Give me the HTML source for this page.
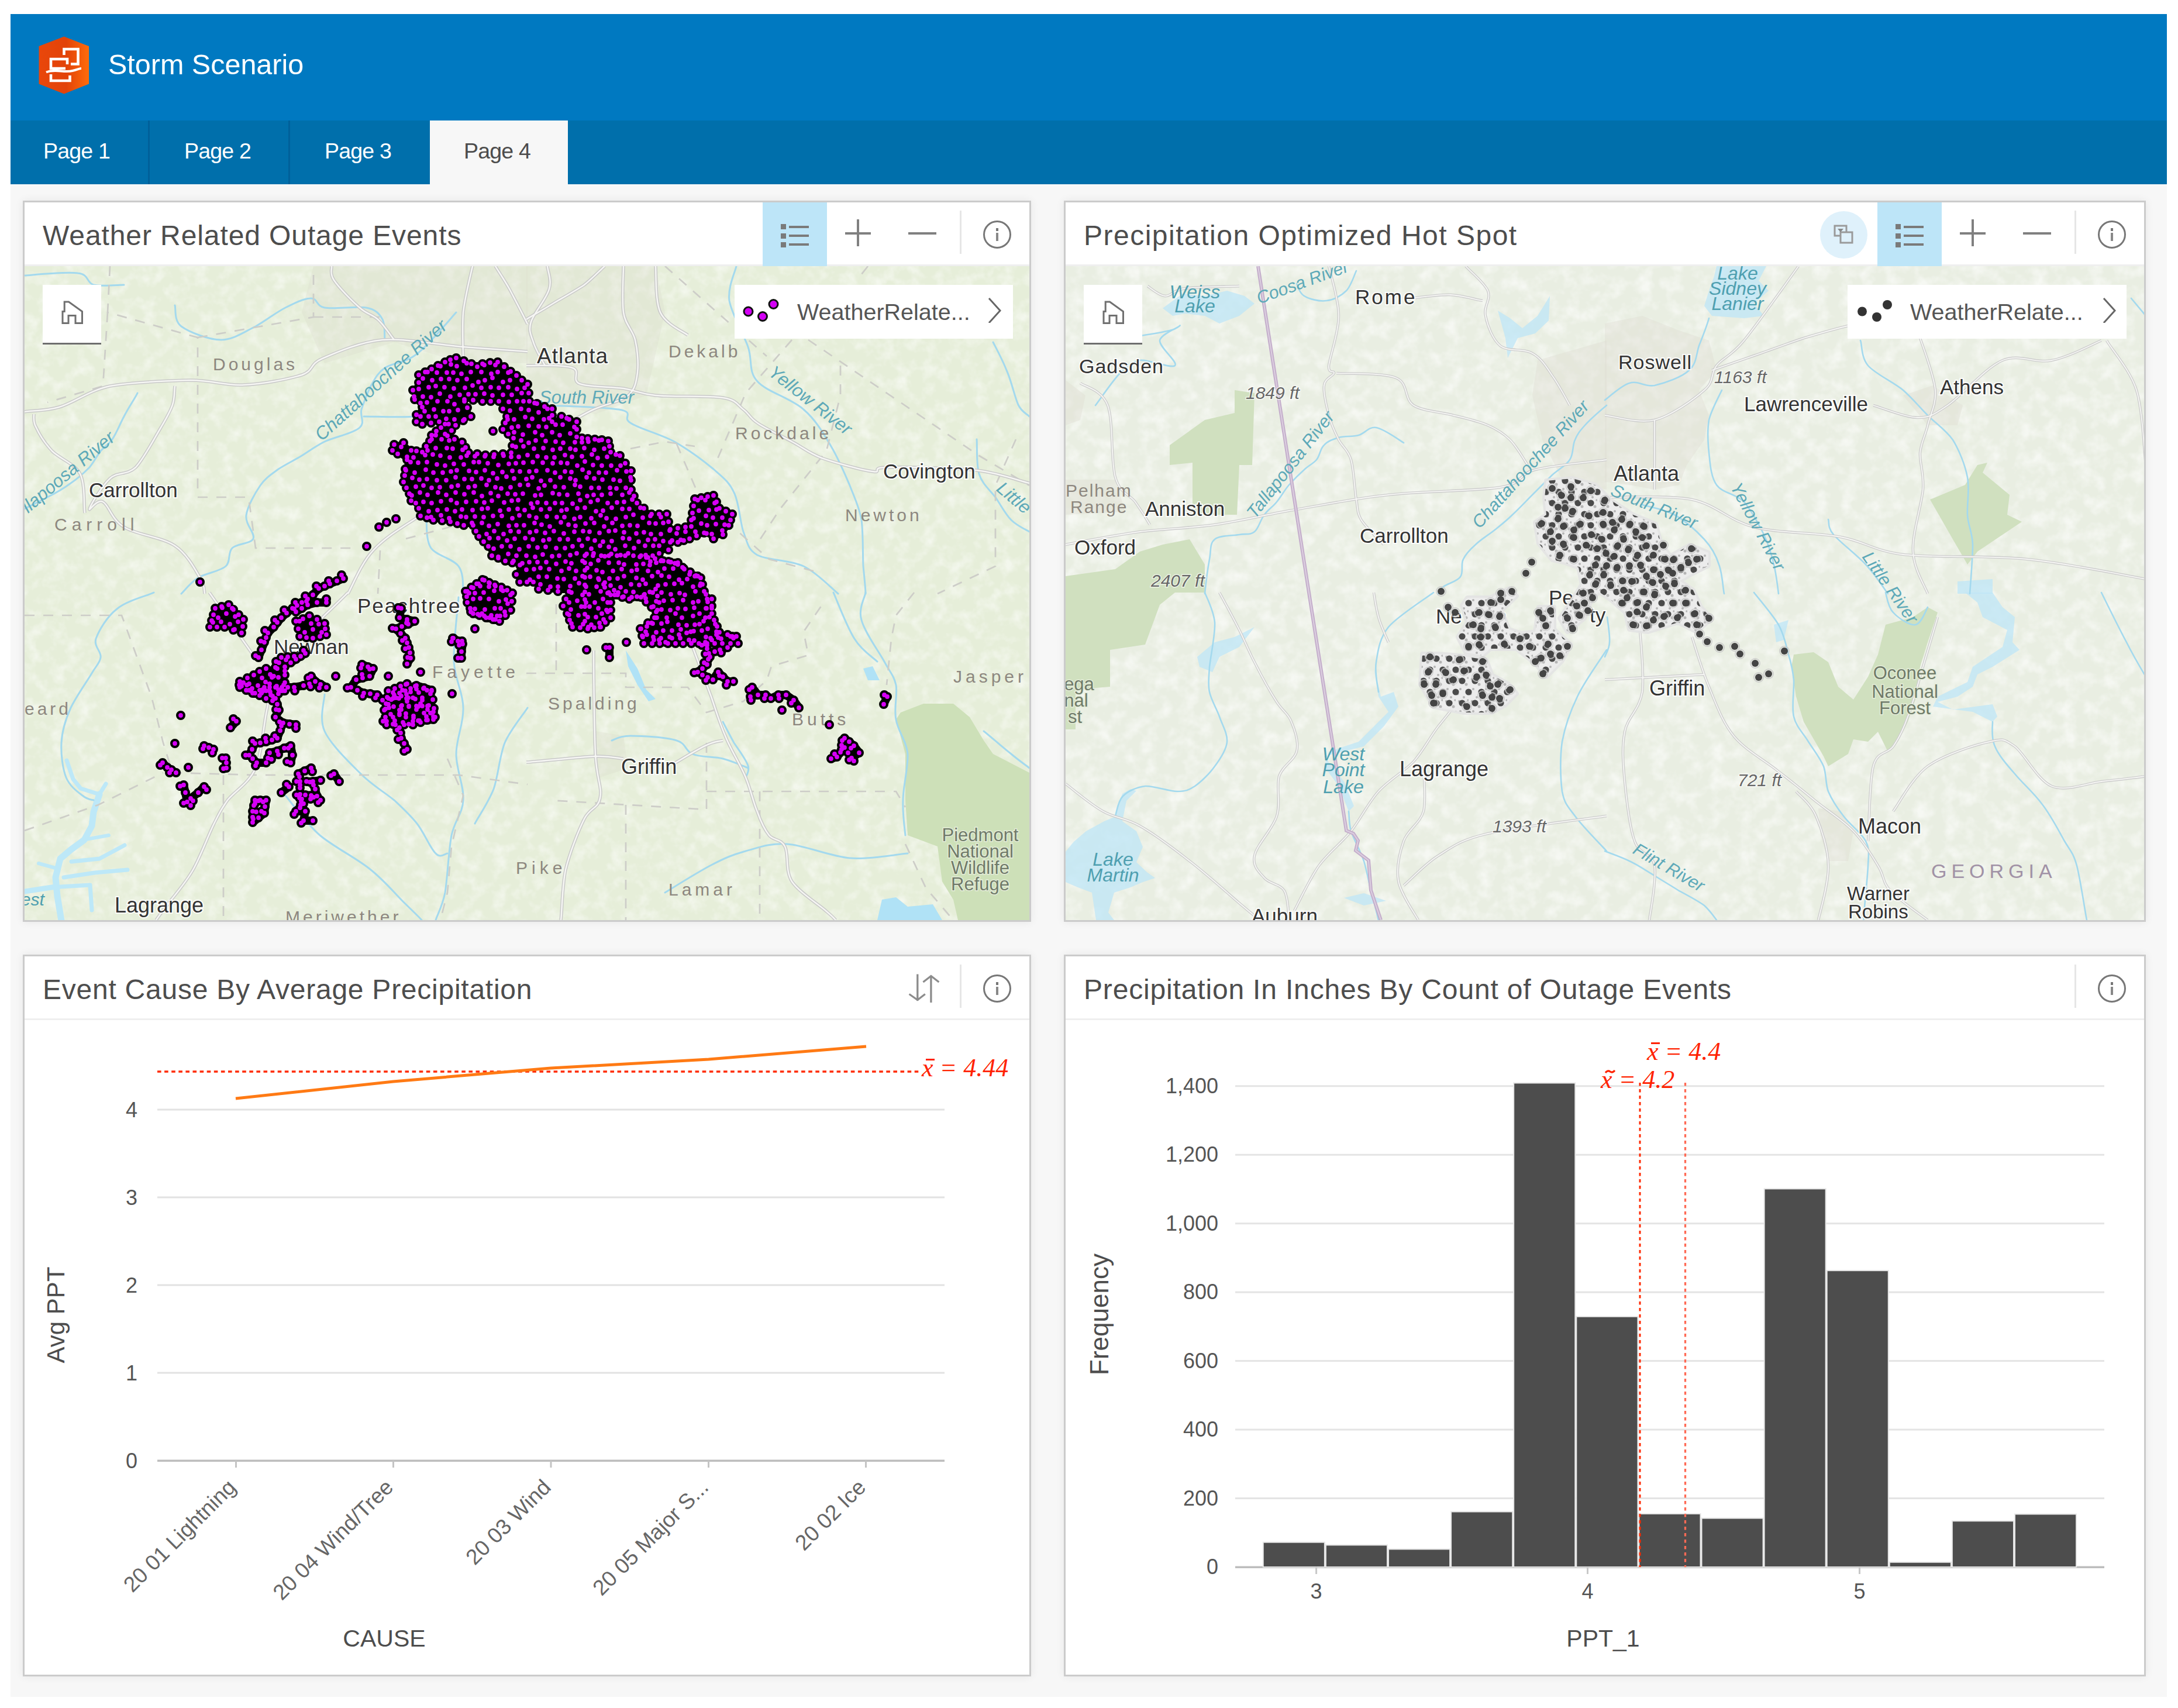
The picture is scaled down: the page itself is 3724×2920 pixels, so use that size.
<!DOCTYPE html><html><head><meta charset="utf-8"><style>
html,body{margin:0;padding:0;background:#fff;width:3724px;height:2920px;overflow:hidden;font-family:"Liberation Sans", sans-serif}
div,svg{box-sizing:content-box}
</style></head><body>
<div style="position:absolute;left:18px;top:24px;width:3687px;height:2877px;background:#f7f7f7"></div>
<div style="position:absolute;left:18px;top:24px;width:3687px;height:182px;background:#0079c1"></div>
<div style="position:absolute;left:18px;top:206px;width:3687px;height:109px;background:#006fab"></div>

<svg style="position:absolute;left:66px;top:62px" width="87" height="99" viewBox="0 0 87 99">
<defs><linearGradient id="lg" x1="0" x2="1" y1="0" y2="0"><stop offset="0" stop-color="#e9470b"/><stop offset="0.55" stop-color="#e24309"/><stop offset="1" stop-color="#ff6c0a"/></linearGradient></defs>
<path d="M43.5 0.5 L86 17 L86 81.5 L43.5 98.5 L0.5 81.5 L0.5 17 Z" fill="url(#lg)"/>
<g fill="none" stroke="#fff" stroke-width="4.6">
<path d="M43.5 32 V22 H67.5 V47.5 H55"/>
<path d="M49 48 V39 H21 V55 H46"/>
<path d="M21 65 V76 H53.5 V67"/>
</g>
<path d="M13 61.5 C28 55 44 63 58 59 C66 57 70 55 73 55" fill="none" stroke="#fff" stroke-width="4"/>
</svg>
<div style="position:absolute;left:185px;top:80px;font-size:48.5px;color:#fff;line-height:60px;white-space:nowrap">Storm Scenario</div>
<div style="position:absolute;left:253px;top:206px;width:3px;height:109px;background:#00609a"></div>
<div style="position:absolute;left:493px;top:206px;width:3px;height:109px;background:#00609a"></div>
<div style="position:absolute;left:735px;top:206px;width:236px;height:109px;background:#f7f7f7"></div>
<div style="position:absolute;left:74px;top:236px;font-size:37.5px;letter-spacing:-0.8px;color:#fff;line-height:44px;white-space:nowrap">Page 1</div>
<div style="position:absolute;left:315px;top:236px;font-size:37.5px;letter-spacing:-0.8px;color:#fff;line-height:44px;white-space:nowrap">Page 2</div>
<div style="position:absolute;left:555px;top:236px;font-size:37.5px;letter-spacing:-0.8px;color:#fff;line-height:44px;white-space:nowrap">Page 3</div>
<div style="position:absolute;left:793px;top:236px;font-size:37.5px;letter-spacing:-0.8px;color:#4c4c4c;line-height:44px;white-space:nowrap">Page 4</div>
<div style="position:absolute;left:39px;top:343px;width:1718px;height:1227px;border:3px solid #cbcbcb;background:#fff;box-shadow:0 0 14px rgba(0,0,0,0.07);overflow:hidden"><div style="position:absolute;left:31px;top:27px;font-size:48px;letter-spacing:0.9px;color:#4d4d4d;white-space:nowrap;line-height:60px">Weather Related Outage Events</div><div style="position:absolute;left:0;top:106px;width:100%;height:3px;background:#efefef"></div></div><svg style="position:absolute;left:1679px;top:374.5px" width="52" height="52" viewBox="0 0 52 52"><circle cx="26" cy="26" r="22.5" fill="none" stroke="#777" stroke-width="3"/><rect x="24" y="15" width="4" height="5" fill="#777"/><rect x="24" y="23" width="4" height="14" fill="#888"/></svg><div style="position:absolute;left:1641px;top:360px;width:3px;height:74px;background:#e6e6e6"></div><svg style="position:absolute;left:1553px;top:374.5px" width="50" height="48"><rect x="0" y="22" width="48" height="4" fill="#808080"/></svg><svg style="position:absolute;left:1445px;top:374.5px" width="50" height="48"><rect x="0" y="22" width="44" height="4" fill="#808080"/><rect x="20" y="0" width="4" height="46" fill="#808080"/></svg><div style="position:absolute;left:1304px;top:346px;width:110px;height:109px;background:#bde5f8"></div><div style="position:absolute;left:1335px;top:380.5px"><svg style="position:absolute;left:0px;top:0px" width="60" height="50" viewBox="0 0 60 50">
<rect x="0" y="2" width="9" height="9" fill="#7a7a7a"/><rect x="0" y="18" width="9" height="9" fill="#7a7a7a"/><rect x="0" y="33" width="9" height="9" fill="#7a7a7a"/>
<rect x="14" y="5" width="34" height="4" fill="#7a7a7a"/><rect x="14" y="20" width="34" height="4" fill="#7a7a7a"/><rect x="14" y="35" width="34" height="4" fill="#7a7a7a"/></svg></div>
<div style="position:absolute;left:1819px;top:343px;width:1844px;height:1227px;border:3px solid #cbcbcb;background:#fff;box-shadow:0 0 14px rgba(0,0,0,0.07);overflow:hidden"><div style="position:absolute;left:31px;top:27px;font-size:48px;letter-spacing:1.5px;color:#4d4d4d;white-space:nowrap;line-height:60px">Precipitation Optimized Hot Spot</div><div style="position:absolute;left:0;top:106px;width:100%;height:3px;background:#efefef"></div></div><svg style="position:absolute;left:3585px;top:374.5px" width="52" height="52" viewBox="0 0 52 52"><circle cx="26" cy="26" r="22.5" fill="none" stroke="#777" stroke-width="3"/><rect x="24" y="15" width="4" height="5" fill="#777"/><rect x="24" y="23" width="4" height="14" fill="#888"/></svg><div style="position:absolute;left:3547px;top:360px;width:3px;height:74px;background:#e6e6e6"></div><svg style="position:absolute;left:3459px;top:374.5px" width="50" height="48"><rect x="0" y="22" width="48" height="4" fill="#808080"/></svg><svg style="position:absolute;left:3351px;top:374.5px" width="50" height="48"><rect x="0" y="22" width="44" height="4" fill="#808080"/><rect x="20" y="0" width="4" height="46" fill="#808080"/></svg><div style="position:absolute;left:3210px;top:346px;width:110px;height:109px;background:#bde5f8"></div><div style="position:absolute;left:3241px;top:380.5px"><svg style="position:absolute;left:0px;top:0px" width="60" height="50" viewBox="0 0 60 50">
<rect x="0" y="2" width="9" height="9" fill="#7a7a7a"/><rect x="0" y="18" width="9" height="9" fill="#7a7a7a"/><rect x="0" y="33" width="9" height="9" fill="#7a7a7a"/>
<rect x="14" y="5" width="34" height="4" fill="#7a7a7a"/><rect x="14" y="20" width="34" height="4" fill="#7a7a7a"/><rect x="14" y="35" width="34" height="4" fill="#7a7a7a"/></svg></div><div style="position:absolute;left:3112px;top:360.5px;width:81px;height:81px;border-radius:50%;background:#dff1fb"></div><svg style="position:absolute;left:3134px;top:382.5px" width="36" height="36" viewBox="0 0 36 36"><rect x="3" y="3" width="20" height="17" fill="none" stroke="#9a9a9a" stroke-width="3"/><rect x="13" y="14" width="20" height="18" fill="#dff1fb" stroke="#9a9a9a" stroke-width="3"/><path d="M8 8h10l-5 6z" fill="#888"/></svg>
<div style="position:absolute;left:39px;top:1632px;width:1718px;height:1228px;border:3px solid #cbcbcb;background:#fff;box-shadow:0 0 14px rgba(0,0,0,0.07);overflow:hidden"><div style="position:absolute;left:31px;top:27px;font-size:48px;letter-spacing:0.75px;color:#4d4d4d;white-space:nowrap;line-height:60px">Event Cause By Average Precipitation</div><div style="position:absolute;left:0;top:106px;width:100%;height:3px;background:#efefef"></div></div><svg style="position:absolute;left:1679px;top:1663.5px" width="52" height="52" viewBox="0 0 52 52"><circle cx="26" cy="26" r="22.5" fill="none" stroke="#777" stroke-width="3"/><rect x="24" y="15" width="4" height="5" fill="#777"/><rect x="24" y="23" width="4" height="14" fill="#888"/></svg><div style="position:absolute;left:1641px;top:1649px;width:3px;height:74px;background:#e6e6e6"></div><svg style="position:absolute;left:1550px;top:1660px" width="60" height="60" viewBox="0 0 60 60"><path d="M18.8 5.6V51M4.6 39.5l14.2 10 13-10M41.9 54V8M28.4 19l13.5-10.5 13.5 10.5" fill="none" stroke="#8c8c8c" stroke-width="3.3"/></svg>
<div style="position:absolute;left:1819px;top:1632px;width:1844px;height:1228px;border:3px solid #cbcbcb;background:#fff;box-shadow:0 0 14px rgba(0,0,0,0.07);overflow:hidden"><div style="position:absolute;left:31px;top:27px;font-size:48px;letter-spacing:0.83px;color:#4d4d4d;white-space:nowrap;line-height:60px">Precipitation In Inches By Count of Outage Events</div><div style="position:absolute;left:0;top:106px;width:100%;height:3px;background:#efefef"></div></div><svg style="position:absolute;left:3585px;top:1663.5px" width="52" height="52" viewBox="0 0 52 52"><circle cx="26" cy="26" r="22.5" fill="none" stroke="#777" stroke-width="3"/><rect x="24" y="15" width="4" height="5" fill="#777"/><rect x="24" y="23" width="4" height="14" fill="#888"/></svg><div style="position:absolute;left:3547px;top:1649px;width:3px;height:74px;background:#e6e6e6"></div>
<svg style="position:absolute;left:42px;top:455px" width="1718" height="1118" viewBox="42 455 1718 1118"><defs><pattern id="mag" x="0" y="0" width="15" height="26" patternUnits="userSpaceOnUse"><circle cx="7.5" cy="6.5" r="4.8" fill="#d800f8"/><circle cx="0" cy="19.5" r="4.8" fill="#d800f8"/><circle cx="15" cy="19.5" r="4.8" fill="#d800f8"/></pattern></defs><rect x="42" y="455" width="1718" height="1118" fill="#e6eed9"/><filter id="tx1" x="0" y="0" width="100%" height="100%"><feTurbulence type="fractalNoise" baseFrequency="0.045" numOctaves="3" seed="7"/><feColorMatrix values="0 0 0 0 1  0 0 0 0 1  0 0 0 0 1  2.2 0 0 0 -0.95"/></filter><rect x="42" y="455" width="1718" height="1118" filter="url(#tx1)" opacity="0.55"/><path d="M536 455 L902 455 L902 621 L792 621 L674 585 L555 621 L516 534Z" fill="#dcdccd" opacity="0.3"/><path d="M900 455 L1121 455 L1137 534 L1105 676 L1018 708 L900 676Z" fill="#dcdccd" opacity="0.3"/><path d="M1018 1250 L1066 1258 L1074 1313 L1026 1329 L1018 1289Z" fill="#dcdccd" opacity="0.3"/><path d="M1540 1218 L1579 1203 L1630 1203 L1658 1226 L1682 1266 L1698 1289 L1760 1321 L1760 1573 L1638 1573 L1630 1538 L1611 1507 L1603 1447 L1552 1428 L1548 1368 L1548 1289 L1532 1230Z" fill="#cde0b8" opacity="1"/><path d="M1508 1538 L1532 1534 L1552 1550 L1595 1546 L1611 1573 L1500 1573Z" fill="#b0e2f6" opacity="1"/><path d="M1070 1112 L1090 1143 L1105 1179 L1121 1195 L1109 1199 L1090 1171 L1074 1139Z" fill="#b0e2f6" opacity="1"/><path d="M1476 1143 L1492 1139 L1504 1163 L1484 1163Z" fill="#b0e2f6" opacity="1"/><g fill="none" stroke="#bde8f8" stroke-linejoin="round" stroke-linecap="round"><path d="M114 1300 L125 1332 L138 1348 L170 1358 L181 1340" stroke-width="7"/><path d="M170 1358 L160 1388 L157 1412 L144 1436 L122 1452 L103 1468 L95 1500 L98 1532 L106 1580" stroke-width="11"/><path d="M141 1436 L186 1428" stroke-width="6"/><path d="M122 1473 L170 1468 L213 1445" stroke-width="7"/><path d="M109 1500 L162 1492 L218 1487" stroke-width="7"/><path d="M103 1516 L154 1513 L157 1556" stroke-width="7"/><path d="M95 1484 L66 1476" stroke-width="6"/><path d="M42 1524 L95 1516" stroke-width="9"/></g><g fill="none" stroke="#a3d9ee" stroke-width="3" stroke-linejoin="round" stroke-linecap="round"><path d="M780 534 C769 546 734 589 713 605 C693 621 671 620 658 629 C645 638 641 648 634 660 C628 672 622 688 618 700 C615 712 625 722 615 731 C604 741 572 747 555 755 C539 763 529 771 516 779 C503 787 488 794 476 802 C464 811 454 817 445 830 C436 843 423 866 421 881 C419 897 437 912 433 921 C429 930 405 929 397 937 C389 945 395 960 386 968 C376 977 351 980 338 988 C326 996 315 1010 310 1015"/><path d="M263 1013 C253 1018 216 1027 200 1041 C183 1054 169 1078 164 1092 C160 1106 174 1114 172 1124 C171 1133 165 1137 157 1151 C148 1166 130 1191 121 1210 C112 1230 106 1250 105 1270 C104 1289 107 1314 113 1329 C119 1344 133 1354 141 1360 C149 1367 157 1367 160 1368"/><path d="M299 522 C301 528 297 548 310 558 C324 568 357 581 378 581 C399 581 418 567 437 558 C455 548 472 534 488 526 C504 518 520 510 532 510 C543 510 540 523 555 526 C571 529 610 523 626 526 C643 529 649 537 654 546 C659 555 657 575 658 581"/><path d="M235 672 C232 679 219 698 212 712 C205 725 199 741 192 751 C185 761 179 763 172 771 C166 779 161 789 153 799 C144 808 133 818 121 826 C109 835 95 843 81 850 C68 857 49 866 42 870"/><path d="M42 471 C57 470 113 464 133 467 C153 469 147 483 160 487 C174 490 203 487 212 487"/><path d="M729 889 C730 897 728 924 737 937 C746 950 775 955 784 968 C794 981 791 1007 792 1015"/><path d="M622 712 C638 712 692 714 713 712 C735 710 746 702 753 700"/><path d="M1259 455 C1257 465 1244 491 1247 514 C1251 537 1271 570 1279 593 C1287 616 1279 635 1295 652 C1311 670 1353 681 1374 700 C1395 718 1408 741 1421 763 C1434 785 1444 809 1453 830 C1461 851 1469 866 1473 889 C1476 912 1475 947 1476 968 C1478 989 1480 1007 1480 1015"/><path d="M900 692 C926 693 1028 695 1058 700 C1088 705 1062 714 1078 723 C1093 733 1129 742 1153 755 C1176 768 1203 788 1220 802 C1237 817 1247 824 1255 842 C1264 860 1265 891 1271 909 C1278 927 1278 939 1295 949 C1312 958 1351 957 1374 968 C1397 979 1423 1007 1433 1015"/><path d="M1670 751 C1671 761 1669 794 1674 810 C1679 827 1692 837 1702 850 C1711 863 1719 879 1729 889 C1739 899 1755 906 1760 909"/><path d="M1698 585 C1702 593 1714 615 1721 633 C1729 650 1735 679 1741 692 C1747 705 1757 708 1760 712"/><path d="M555 1187 C555 1197 545 1228 555 1250 C565 1272 595 1301 615 1321 C634 1341 657 1354 674 1368 C690 1383 701 1393 713 1408 C725 1423 736 1451 745 1459 C753 1468 761 1459 765 1459"/><path d="M488 1360 C498 1372 523 1407 547 1428 C572 1449 610 1467 634 1487 C659 1507 679 1532 694 1546 C708 1560 717 1568 721 1573"/><path d="M784 1021 C783 1039 775 1100 776 1131 C778 1163 792 1184 792 1210 C793 1237 780 1263 780 1289 C780 1316 794 1345 792 1368 C791 1391 778 1401 772 1428 C767 1454 765 1502 761 1526 C756 1551 747 1565 745 1573"/><path d="M902 1210 C896 1220 873 1247 863 1270 C854 1293 852 1326 844 1349 C835 1372 817 1398 812 1408"/><path d="M1480 1013 C1479 1021 1467 1041 1473 1060 C1478 1080 1502 1113 1512 1131 C1522 1150 1528 1154 1532 1171 C1535 1187 1528 1210 1532 1230 C1535 1250 1550 1266 1552 1289 C1553 1312 1544 1345 1544 1368 C1543 1391 1547 1418 1548 1428"/><path d="M1425 1013 C1431 1026 1448 1072 1461 1092 C1473 1112 1494 1125 1500 1131"/><path d="M1046 1266 C1051 1264 1059 1258 1078 1258 C1096 1258 1139 1260 1157 1266 C1174 1271 1171 1284 1184 1289 C1197 1295 1220 1293 1236 1297 C1251 1301 1272 1310 1279 1313"/><path d="M1236 1234 C1239 1240 1248 1257 1255 1270 C1263 1282 1276 1299 1279 1309 C1282 1319 1276 1326 1275 1329"/><path d="M1137 1526 C1150 1518 1193 1491 1216 1479 C1239 1467 1253 1461 1275 1455 C1297 1449 1317 1441 1346 1443 C1376 1445 1419 1464 1453 1467 C1487 1470 1535 1460 1552 1459"/><path d="M1682 1250 C1690 1256 1716 1279 1729 1289 C1742 1300 1755 1309 1760 1313"/></g><g fill="none" stroke="#cdcdc8" stroke-width="2.7" stroke-dasharray="17 15"><path d="M188 455 L184 534 L338 577 L338 850 L425 850 L437 937 L607 937"/><path d="M184 534 L176 660 L81 688"/><path d="M338 577 L536 542 L536 455"/><path d="M536 542 L650 542"/><path d="M650 941 L646 1015"/><path d="M694 921 L784 897"/><path d="M1137 455 L1311 609"/><path d="M1354 581 L1275 672 L1224 791"/><path d="M1382 581 L1674 779 L1760 830"/><path d="M1484 455 L1465 479"/><path d="M1437 625 L1437 676 L1413 771 L1334 870 L1295 929"/><path d="M1157 759 L1196 850 L1315 956 L1405 980"/><path d="M1737 751 L1702 830 L1702 968 L1603 1015"/><path d="M1078 767 L1137 755 L1188 763"/><path d="M42 1052 L208 1052 L259 1191 L279 1270 L295 1321 L437 1325 L784 1325 L902 1341"/><path d="M382 1325 L382 1573"/><path d="M765 1297 L792 1360 L772 1447 L765 1526 L753 1573"/><path d="M42 1420 L168 1376 L279 1321"/><path d="M900 1151 L1070 1151 L1070 1175 L1176 1175 L1208 1218 L1271 1199 L1311 1163 L1319 1139 L1382 1120 L1374 1080 L1409 1029"/><path d="M1563 1013 L1532 1052 L1524 1092 L1516 1171"/><path d="M951 1033 L951 1151"/><path d="M1208 1270 L1208 1384 L939 1368"/><path d="M1070 1376 L1070 1573"/><path d="M1208 1353 L1532 1353 L1548 1380"/><path d="M1299 1353 L1299 1573"/><path d="M1548 1443 L1583 1518 L1630 1573"/></g><g fill="none" stroke="#c9c9c9" stroke-width="5.5" stroke-linejoin="round"><path d="M42 704 C52 702 77 703 101 696 C126 689 151 668 188 660 C226 653 288 651 326 650 C364 650 386 660 417 658 C449 657 493 648 516 641 C538 633 528 623 551 613 C574 603 614 585 654 581 C694 578 751 590 792 593 C834 596 884 600 902 601"/><path d="M900 625 C913 625 964 623 979 629 C994 634 976 650 991 656 C1005 662 1044 661 1066 664 C1088 668 1093 673 1121 676 C1149 679 1211 676 1236 680 C1261 684 1261 693 1271 700 C1281 707 1281 714 1295 723 C1309 733 1336 745 1354 755 C1373 765 1382 774 1405 783 C1428 791 1474 804 1492 806 C1511 809 1486 799 1516 799 C1546 798 1629 800 1670 804 C1711 809 1745 823 1760 826"/><path d="M936 455 C936 462 944 479 939 494 C935 510 913 535 908 550 C903 565 908 573 912 585 C916 598 928 618 932 625"/><path d="M1066 455 C1066 468 1063 513 1066 534 C1069 555 1082 564 1086 581 C1090 598 1092 621 1090 637 C1088 652 1086 666 1074 676 C1061 687 1034 691 1015 700 C995 709 968 726 959 731"/><path d="M1034 455 C1028 460 1013 476 999 487 C984 497 964 508 947 518 C931 528 908 541 900 546"/><path d="M567 455 C568 459 563 467 571 479 C579 491 602 515 615 526 C627 537 636 537 646 546 C656 555 669 575 674 581"/><path d="M808 455 C805 468 795 508 792 534 C790 560 792 600 792 613"/><path d="M847 455 C851 462 862 478 871 494 C880 511 897 544 902 554"/><path d="M299 660 C298 666 299 680 295 692 C291 704 285 714 275 731 C264 749 246 784 232 799 C217 813 201 806 188 818 C175 830 155 863 153 870 C151 876 166 852 176 858 C186 863 191 889 212 901 C232 914 277 918 299 933 C320 947 334 974 342 988 C351 1002 349 1010 350 1015"/><path d="M58 708 C58 712 56 721 62 731 C67 742 77 758 89 771 C102 784 128 793 137 810 C146 828 143 866 145 877"/><path d="M902 771 C884 784 824 831 792 850 C761 869 739 870 713 885 C688 901 658 919 638 941 C618 962 602 1003 595 1015"/><path d="M595 1013 C588 1020 575 1033 555 1052 C536 1072 493 1105 476 1131 C460 1158 463 1180 457 1210 C450 1241 448 1287 437 1313 C426 1339 401 1353 389 1368 C378 1384 376 1388 366 1408 C356 1428 343 1464 330 1487 C317 1510 297 1532 287 1546 C276 1560 270 1568 267 1573"/><path d="M358 1013 L433 1120"/><path d="M1176 1084 C1183 1102 1205 1162 1216 1191 C1226 1220 1230 1235 1240 1258 C1249 1281 1266 1307 1275 1329 C1284 1351 1288 1372 1295 1388 C1301 1405 1307 1418 1315 1428 C1322 1437 1336 1434 1342 1447 C1349 1460 1342 1488 1354 1507 C1366 1525 1401 1547 1413 1558 C1426 1569 1426 1570 1429 1573"/><path d="M900 1303 C920 1302 991 1294 1018 1293 C1046 1292 1058 1297 1066 1297"/><path d="M1015 1112 C1015 1141 1016 1247 1018 1289 C1020 1332 1030 1346 1026 1364 C1023 1383 1009 1380 999 1400 C989 1420 974 1458 967 1487 C961 1516 961 1559 959 1573"/><path d="M1153 1305 C1162 1300 1194 1280 1208 1274 C1222 1267 1231 1267 1236 1266"/><path d="M1121 455 C1122 468 1120 514 1129 534 C1138 554 1168 567 1176 573"/></g><g fill="none" stroke="#f6f6f4" stroke-width="2.5" stroke-linejoin="round"><path d="M42 704 C52 702 77 703 101 696 C126 689 151 668 188 660 C226 653 288 651 326 650 C364 650 386 660 417 658 C449 657 493 648 516 641 C538 633 528 623 551 613 C574 603 614 585 654 581 C694 578 751 590 792 593 C834 596 884 600 902 601"/><path d="M900 625 C913 625 964 623 979 629 C994 634 976 650 991 656 C1005 662 1044 661 1066 664 C1088 668 1093 673 1121 676 C1149 679 1211 676 1236 680 C1261 684 1261 693 1271 700 C1281 707 1281 714 1295 723 C1309 733 1336 745 1354 755 C1373 765 1382 774 1405 783 C1428 791 1474 804 1492 806 C1511 809 1486 799 1516 799 C1546 798 1629 800 1670 804 C1711 809 1745 823 1760 826"/><path d="M936 455 C936 462 944 479 939 494 C935 510 913 535 908 550 C903 565 908 573 912 585 C916 598 928 618 932 625"/><path d="M1066 455 C1066 468 1063 513 1066 534 C1069 555 1082 564 1086 581 C1090 598 1092 621 1090 637 C1088 652 1086 666 1074 676 C1061 687 1034 691 1015 700 C995 709 968 726 959 731"/><path d="M1034 455 C1028 460 1013 476 999 487 C984 497 964 508 947 518 C931 528 908 541 900 546"/><path d="M567 455 C568 459 563 467 571 479 C579 491 602 515 615 526 C627 537 636 537 646 546 C656 555 669 575 674 581"/><path d="M808 455 C805 468 795 508 792 534 C790 560 792 600 792 613"/><path d="M847 455 C851 462 862 478 871 494 C880 511 897 544 902 554"/><path d="M299 660 C298 666 299 680 295 692 C291 704 285 714 275 731 C264 749 246 784 232 799 C217 813 201 806 188 818 C175 830 155 863 153 870 C151 876 166 852 176 858 C186 863 191 889 212 901 C232 914 277 918 299 933 C320 947 334 974 342 988 C351 1002 349 1010 350 1015"/><path d="M58 708 C58 712 56 721 62 731 C67 742 77 758 89 771 C102 784 128 793 137 810 C146 828 143 866 145 877"/><path d="M902 771 C884 784 824 831 792 850 C761 869 739 870 713 885 C688 901 658 919 638 941 C618 962 602 1003 595 1015"/><path d="M595 1013 C588 1020 575 1033 555 1052 C536 1072 493 1105 476 1131 C460 1158 463 1180 457 1210 C450 1241 448 1287 437 1313 C426 1339 401 1353 389 1368 C378 1384 376 1388 366 1408 C356 1428 343 1464 330 1487 C317 1510 297 1532 287 1546 C276 1560 270 1568 267 1573"/><path d="M358 1013 L433 1120"/><path d="M1176 1084 C1183 1102 1205 1162 1216 1191 C1226 1220 1230 1235 1240 1258 C1249 1281 1266 1307 1275 1329 C1284 1351 1288 1372 1295 1388 C1301 1405 1307 1418 1315 1428 C1322 1437 1336 1434 1342 1447 C1349 1460 1342 1488 1354 1507 C1366 1525 1401 1547 1413 1558 C1426 1569 1426 1570 1429 1573"/><path d="M900 1303 C920 1302 991 1294 1018 1293 C1046 1292 1058 1297 1066 1297"/><path d="M1015 1112 C1015 1141 1016 1247 1018 1289 C1020 1332 1030 1346 1026 1364 C1023 1383 1009 1380 999 1400 C989 1420 974 1458 967 1487 C961 1516 961 1559 959 1573"/><path d="M1153 1305 C1162 1300 1194 1280 1208 1274 C1222 1267 1231 1267 1236 1266"/><path d="M1121 455 C1122 468 1120 514 1129 534 C1138 554 1168 567 1176 573"/></g><g font-family="Liberation Sans"><text x="918" y="621" font-size="37" fill="#333" stroke="#fff" stroke-width="4" stroke-opacity="0.85" paint-order="stroke" letter-spacing="1">Atlanta</text><text x="152" y="850" font-size="35" fill="#333" stroke="#fff" stroke-width="4" stroke-opacity="0.85" paint-order="stroke" letter-spacing="0">Carrollton</text><text x="1510" y="818" font-size="35" fill="#333" stroke="#fff" stroke-width="4" stroke-opacity="0.85" paint-order="stroke" letter-spacing="0">Covington</text><text x="611" y="1048" font-size="35" fill="#333" stroke="#fff" stroke-width="4" stroke-opacity="0.85" paint-order="stroke" letter-spacing="2">Peachtree</text><text x="468" y="1118" font-size="35" fill="#333" stroke="#fff" stroke-width="4" stroke-opacity="0.85" paint-order="stroke" letter-spacing="0">Newnan</text><text x="1062" y="1323" font-size="36" fill="#333" stroke="#fff" stroke-width="4" stroke-opacity="0.85" paint-order="stroke" letter-spacing="0">Griffin</text><text x="196" y="1560" font-size="36" fill="#333" stroke="#fff" stroke-width="4" stroke-opacity="0.85" paint-order="stroke" letter-spacing="0">Lagrange</text><text x="364" y="633" font-size="30" fill="#8d877f" letter-spacing="5">Douglas</text><text x="1143" y="611" font-size="30" fill="#8d877f" letter-spacing="5">Dekalb</text><text x="1257" y="751" font-size="30" fill="#8d877f" letter-spacing="5">Rockdale</text><text x="93" y="907" font-size="30" fill="#8d877f" letter-spacing="8">Carroll</text><text x="1445" y="891" font-size="30" fill="#8d877f" letter-spacing="5">Newton</text><text x="739" y="1159" font-size="30" fill="#8d877f" letter-spacing="7">Fayette</text><text x="937" y="1213" font-size="30" fill="#8d877f" letter-spacing="5">Spalding</text><text x="1630" y="1167" font-size="30" fill="#8d877f" letter-spacing="6">Jasper</text><text x="1354" y="1240" font-size="30" fill="#8d877f" letter-spacing="6">Butts</text><text x="42" y="1222" font-size="30" fill="#8d877f" letter-spacing="5">eard</text><text x="882" y="1494" font-size="30" fill="#8d877f" letter-spacing="7">Pike</text><text x="1143" y="1531" font-size="30" fill="#8d877f" letter-spacing="6">Lamar</text><text x="488" y="1578" font-size="30" fill="#8d877f" letter-spacing="5">Meriwether</text><text x="1676" y="1438" font-size="31" fill="#6f7a68" stroke="#e4ecd9" stroke-width="3" paint-order="stroke" text-anchor="middle">Piedmont</text><text x="1676" y="1466" font-size="31" fill="#6f7a68" stroke="#e4ecd9" stroke-width="3" paint-order="stroke" text-anchor="middle">National</text><text x="1676" y="1494" font-size="31" fill="#6f7a68" stroke="#e4ecd9" stroke-width="3" paint-order="stroke" text-anchor="middle">Wildlife</text><text x="1676" y="1522" font-size="31" fill="#6f7a68" stroke="#e4ecd9" stroke-width="3" paint-order="stroke" text-anchor="middle">Refuge</text><text x="0" y="0" transform="translate(550,755) rotate(-42)" font-size="31" fill="#5da9b8" font-style="italic" letter-spacing="0">Chattahoochee River</text><text x="0" y="0" transform="translate(922,690) rotate(0)" font-size="31" fill="#5da9b8" font-style="italic" letter-spacing="0">South River</text><text x="0" y="0" transform="translate(1312,640) rotate(38)" font-size="31" fill="#5da9b8" font-style="italic" letter-spacing="0">Yellow River</text><text x="0" y="0" transform="translate(48,878) rotate(-40)" font-size="31" fill="#5da9b8" font-style="italic" letter-spacing="0">llapoosa River</text><text x="0" y="0" transform="translate(1702,838) rotate(40)" font-size="31" fill="#5da9b8" font-style="italic" letter-spacing="0">Little</text><text x="42" y="1548" font-size="30" fill="#4e9fb0" font-style="italic" text-anchor="middle">West</text></g><g><path d="M716 641 L738 631 L761 619 L780 612 L806 622 L825 622 L851 619 L873 635 L902 657 L905 686 L944 699 L944 721 L960 712 L986 721 L986 747 L1005 750 L1040 754 L1044 773 L1060 779 L1079 805 L1079 837 L1089 860 L1114 879 L1140 879 L1146 905 L1172 901 L1182 889 L1188 853 L1220 847 L1230 869 L1252 879 L1246 898 L1236 914 L1220 921 L1204 911 L1179 921 L1159 927 L1146 927 L1143 940 L1127 946 L1105 953 L1111 966 L1134 959 L1159 962 L1179 982 L1198 988 L1204 1011 L1217 1024 L1217 1049 L1230 1081 L1259 1088 L1262 1100 L1101 1100 L1095 1075 L1121 1056 L1127 1030 L1121 1007 L1101 1017 L1076 1024 L1056 1017 L1044 1001 L1024 991 L1044 1017 L1044 1056 L1027 1072 L1005 1075 L979 1072 L970 1049 L963 1036 L973 1011 L954 1011 L921 1007 L912 995 L889 995 L883 982 L889 966 L864 959 L841 950 L835 934 L819 917 L809 898 L793 898 L770 892 L741 889 L719 882 L716 869 L703 856 L700 844 L690 824 L693 802 L696 786 L680 776 L671 770 L674 760 L690 757 L703 770 L722 773 L735 754 L738 744 L754 731 L761 725 L751 721 L722 725 L712 721 L712 709 L722 696 L709 683 L706 667 L716 654Z M796 1011 L825 991 L857 1004 L876 1014 L873 1043 L854 1062 L831 1056 L809 1049 L799 1030Z M368 1040 L391 1034 L416 1059 L413 1082 L384 1072 L359 1072Z M506 1062 L529 1053 L555 1066 L558 1085 L535 1091 L513 1088Z M799 1011 L828 992 L857 1008 L873 1017 L863 1046 L847 1059 L828 1053 L805 1046 L799 1030Z M664 1181 L696 1169 L738 1181 L744 1226 L706 1239 L661 1239 L657 1214Z M455 1143 L487 1140 L487 1181 L455 1194 L410 1175 L423 1159Z M1000 950 L1096 950 L1154 963 L1193 985 L1209 1024 L1206 1056 L1186 1079 L1161 1085 L1138 1098 L1106 1085 L1096 1075 L1116 1066 L1122 1046 L1096 1021 L1064 1021 L1039 1014 L1039 1046 L1026 1072 L1006 1072 L1000 1062Z M805 712 L779 727 L765 745 L790 756 L801 774 L830 778 L874 774 L878 749 L860 734 L867 712 L853 686 L825 686 L794 683Z " fill="#000" fill-rule="nonzero" stroke="#000" stroke-width="6" stroke-linejoin="round"/><path d="M587 989 L564 998 L545 1006 L535 1017 L516 1030 L500 1040 L481 1056 L468 1072 L458 1082 L452 1098 L442 1124 M558 1030 L542 1030 L526 1034 L506 1046 M522 1117 L506 1127 L497 1133 L481 1124 L474 1143 L468 1156 L461 1169 L455 1181 L471 1194 L477 1214 L471 1226 L484 1236 L506 1239 M484 1236 L474 1262 L455 1268 L436 1271 L426 1291 L439 1304 L455 1304 L461 1287 L474 1284 L497 1275 L500 1291 L497 1304 M410 1165 L426 1169 L436 1185 L452 1175 L471 1175 L503 1175 L519 1172 L539 1165 L558 1175 M532 1156 L539 1165 M686 1040 L683 1056 L709 1062 L677 1075 L693 1091 L699 1107 L702 1125 L696 1135 M775 1091 L791 1101 L789 1114 L789 1125 M619 1136 L638 1143 L632 1156 L609 1162 L600 1175 L622 1185 L645 1188 L654 1197 L664 1204 L674 1188 L693 1181 L712 1172 L738 1180 M674 1188 L722 1197 L741 1217 L741 1230 L706 1233 L683 1220 L661 1233 L683 1244 L686 1262 L696 1281 M686 1207 L712 1207 L731 1207 M278 1304 L286 1312 L301 1321 M314 1342 L317 1355 L320 1371 L326 1377 M326 1365 L339 1355 L349 1345 M510 1323 L532 1313 M513 1336 L535 1336 L548 1334 M494 1345 L481 1355 M513 1358 L542 1361 L548 1368 M519 1374 L506 1387 L522 1387 L519 1403 L535 1403 M513 1336 L513 1358 L519 1374 M535 1336 L542 1361 M571 1323 L580 1336 M436 1368 L455 1368 L452 1390 L432 1406 L432 1387 L436 1368 M349 1275 L365 1281 M386 1296 L387 1313 M404 1233 L394 1244 M1206 1098 L1225 1085 M1212 1117 L1231 1111 L1244 1107 M1206 1101 L1212 1117 L1209 1136 L1193 1149 L1219 1162 L1228 1149 L1244 1165 L1254 1165 M1286 1175 L1296 1188 L1309 1188 L1318 1194 L1331 1188 L1344 1188 L1357 1197 L1366 1210 M1283 1191 L1296 1188 M1444 1262 L1460 1275 L1469 1287 M1444 1278 L1431 1294 L1421 1297 M1456 1296 L1469 1287 M1444 1278 L1456 1296 M1517 1191 L1511 1204 M1042 1107 L1042 1124 " fill="none" stroke="#000" stroke-width="14" stroke-linejoin="round" stroke-linecap="round"/><path d="M716 641h0M727 636h0M738 631h0M749 625h0M761 619h0M770 615h0M780 612h0M793 617h0M806 622h0M825 622h0M838 620h0M851 619h0M862 627h0M873 635h0M883 642h0M892 650h0M902 657h0M904 672h0M905 686h0M918 690h0M931 695h0M944 699h0M944 710h0M944 721h0M960 712h0M973 717h0M986 721h0M986 734h0M986 747h0M995 749h0M1005 750h0M1017 751h0M1029 752h0M1040 754h0M1042 763h0M1044 773h0M1060 779h0M1069 792h0M1079 805h0M1079 821h0M1079 837h0M1084 848h0M1089 860h0M1101 869h0M1114 879h0M1127 879h0M1140 879h0M1143 892h0M1146 905h0M1159 903h0M1172 901h0M1182 889h0M1184 877h0M1186 865h0M1188 853h0M1199 851h0M1210 849h0M1220 847h0M1225 858h0M1230 869h0M1241 874h0M1252 879h0M1249 889h0M1246 898h0M1236 914h0M1220 921h0M1204 911h0M1191 916h0M1179 921h0M1169 924h0M1159 927h0M1146 927h0M1143 940h0M1127 946h0M1116 950h0M1105 953h0M1111 966h0M1122 962h0M1134 959h0M1146 961h0M1159 962h0M1169 972h0M1179 982h0M1188 985h0M1198 988h0M1201 999h0M1204 1011h0M1217 1024h0M1217 1036h0M1217 1049h0M1221 1060h0M1226 1071h0M1230 1081h0M1244 1085h0M1259 1088h0M1262 1100h0M1249 1100h0M1235 1100h0M1222 1100h0M1209 1100h0M1195 1100h0M1182 1100h0M1168 1100h0M1155 1100h0M1142 1100h0M1128 1100h0M1115 1100h0M1101 1100h0M1098 1087h0M1095 1075h0M1108 1065h0M1121 1056h0M1124 1043h0M1127 1030h0M1124 1019h0M1121 1007h0M1111 1012h0M1101 1017h0M1089 1020h0M1076 1024h0M1066 1020h0M1056 1017h0M1050 1009h0M1044 1001h0M1034 996h0M1024 991h0M1034 1004h0M1044 1017h0M1044 1030h0M1044 1043h0M1044 1056h0M1035 1064h0M1027 1072h0M1016 1073h0M1005 1075h0M992 1073h0M979 1072h0M974 1060h0M970 1049h0M963 1036h0M968 1024h0M973 1011h0M954 1011h0M937 1009h0M921 1007h0M912 995h0M901 995h0M889 995h0M883 982h0M889 966h0M876 962h0M864 959h0M852 954h0M841 950h0M835 934h0M827 926h0M819 917h0M814 908h0M809 898h0M793 898h0M782 895h0M770 892h0M756 890h0M741 889h0M730 885h0M719 882h0M716 869h0M703 856h0M700 844h0M695 834h0M690 824h0M692 813h0M693 802h0M696 786h0M680 776h0M671 770h0M674 760h0M690 757h0M703 770h0M712 771h0M722 773h0M729 763h0M735 754h0M738 744h0M746 737h0M754 731h0M761 725h0M751 721h0M737 723h0M722 725h0M712 721h0M712 709h0M722 696h0M709 683h0M706 667h0M716 654h0M716 641h0M796 1011h0M806 1004h0M815 998h0M825 991h0M836 996h0M846 1000h0M857 1004h0M867 1009h0M876 1014h0M875 1028h0M873 1043h0M864 1052h0M854 1062h0M843 1059h0M831 1056h0M820 1052h0M809 1049h0M804 1040h0M799 1030h0M798 1020h0M796 1011h0M368 1040h0M379 1037h0M391 1034h0M399 1042h0M408 1051h0M416 1059h0M415 1071h0M413 1082h0M399 1077h0M384 1072h0M371 1072h0M359 1072h0M362 1061h0M365 1051h0M368 1040h0M506 1062h0M518 1058h0M529 1053h0M542 1059h0M555 1066h0M556 1075h0M558 1085h0M547 1088h0M535 1091h0M524 1090h0M513 1088h0M510 1075h0M506 1062h0M799 1011h0M809 1005h0M818 998h0M828 992h0M837 997h0M847 1002h0M857 1008h0M873 1017h0M868 1032h0M863 1046h0M855 1053h0M847 1059h0M837 1056h0M828 1053h0M817 1050h0M805 1046h0M799 1030h0M799 1011h0M664 1181h0M675 1177h0M685 1173h0M696 1169h0M710 1173h0M724 1177h0M738 1181h0M740 1196h0M742 1211h0M744 1226h0M731 1231h0M719 1235h0M706 1239h0M691 1239h0M676 1239h0M661 1239h0M659 1226h0M657 1214h0M660 1203h0M662 1192h0M664 1181h0M455 1143h0M471 1141h0M487 1140h0M487 1154h0M487 1167h0M487 1181h0M476 1186h0M466 1190h0M455 1194h0M444 1189h0M432 1185h0M421 1180h0M410 1175h0M416 1167h0M423 1159h0M434 1154h0M444 1148h0M455 1143h0M1000 950h0M1014 950h0M1028 950h0M1041 950h0M1055 950h0M1069 950h0M1083 950h0M1096 950h0M1108 953h0M1120 955h0M1131 958h0M1143 960h0M1154 963h0M1167 970h0M1180 978h0M1193 985h0M1198 998h0M1204 1011h0M1209 1024h0M1207 1040h0M1206 1056h0M1196 1067h0M1186 1079h0M1174 1082h0M1161 1085h0M1149 1091h0M1138 1098h0M1127 1094h0M1117 1089h0M1106 1085h0M1096 1075h0M1106 1071h0M1116 1066h0M1119 1056h0M1122 1046h0M1114 1038h0M1105 1029h0M1096 1021h0M1080 1021h0M1064 1021h0M1051 1017h0M1039 1014h0M1039 1030h0M1039 1046h0M1032 1059h0M1026 1072h0M1006 1072h0M1000 1062h0M1000 1050h0M1000 1037h0M1000 1025h0M1000 1012h0M1000 1000h0M1000 987h0M1000 975h0M1000 962h0M1000 950h0M805 712h0M792 719h0M779 727h0M772 736h0M765 745h0M777 751h0M790 756h0M796 765h0M801 774h0M816 776h0M830 778h0M845 777h0M860 776h0M874 774h0M876 762h0M878 749h0M869 742h0M860 734h0M864 723h0M867 712h0M860 699h0M853 686h0M839 686h0M825 686h0M809 684h0M794 683h0M799 697h0M805 712h0M587 989h0M576 993h0M564 998h0M555 1002h0M545 1006h0M535 1017h0M526 1024h0M516 1030h0M508 1035h0M500 1040h0M490 1048h0M481 1056h0M474 1064h0M468 1072h0M458 1082h0M455 1090h0M452 1098h0M447 1111h0M442 1124h0M584 983h0M562 993h0M541 1002h0M522 1019h0M505 1030h0M486 1043h0M470 1060h0M453 1078h0M446 1096h0M437 1121h0M558 1030h0M542 1030h0M526 1034h0M516 1040h0M506 1046h0M558 1024h0M524 1028h0M503 1041h0M522 1117h0M514 1122h0M506 1127h0M497 1133h0M489 1128h0M481 1124h0M477 1133h0M474 1143h0M468 1156h0M461 1169h0M455 1181h0M463 1188h0M471 1194h0M474 1204h0M477 1214h0M471 1226h0M484 1236h0M495 1238h0M506 1239h0M519 1112h0M503 1122h0M492 1123h0M472 1131h0M462 1153h0M449 1182h0M466 1198h0M472 1213h0M481 1241h0M506 1245h0M484 1236h0M479 1249h0M474 1262h0M465 1265h0M455 1268h0M445 1270h0M436 1271h0M431 1281h0M426 1291h0M432 1297h0M439 1304h0M455 1304h0M458 1296h0M461 1287h0M474 1284h0M486 1279h0M497 1275h0M500 1291h0M497 1304h0M478 1234h0M470 1258h0M454 1262h0M432 1267h0M420 1291h0M437 1309h0M464 1298h0M476 1290h0M493 1279h0M491 1302h0M410 1165h0M426 1169h0M431 1177h0M436 1185h0M444 1180h0M452 1175h0M461 1175h0M471 1175h0M482 1175h0M492 1175h0M503 1175h0M519 1172h0M529 1169h0M539 1165h0M548 1170h0M558 1175h0M409 1171h0M426 1180h0M447 1185h0M461 1181h0M482 1181h0M504 1181h0M531 1174h0M546 1176h0M532 1156h0M539 1165h0M527 1159h0M686 1040h0M683 1056h0M696 1059h0M709 1062h0M698 1067h0M687 1071h0M677 1075h0M685 1083h0M693 1091h0M696 1099h0M699 1107h0M701 1116h0M702 1125h0M696 1135h0M681 1039h0M695 1065h0M696 1061h0M671 1074h0M688 1095h0M693 1109h0M697 1124h0M775 1091h0M783 1096h0M791 1101h0M789 1114h0M789 1125h0M772 1097h0M785 1103h0M783 1125h0M619 1136h0M629 1140h0M638 1143h0M632 1156h0M620 1159h0M609 1162h0M600 1175h0M611 1180h0M622 1185h0M633 1186h0M645 1188h0M654 1197h0M664 1204h0M669 1196h0M674 1188h0M683 1185h0M693 1181h0M702 1177h0M712 1172h0M725 1176h0M738 1180h0M617 1142h0M632 1144h0M619 1153h0M594 1176h0M620 1190h0M642 1193h0M665 1210h0M677 1193h0M695 1187h0M712 1178h0M736 1186h0M674 1188h0M686 1190h0M698 1193h0M710 1195h0M722 1197h0M731 1207h0M741 1217h0M741 1230h0M729 1231h0M717 1232h0M706 1233h0M694 1226h0M683 1220h0M672 1226h0M661 1233h0M672 1238h0M683 1244h0M685 1253h0M686 1262h0M691 1271h0M696 1281h0M672 1194h0M696 1199h0M719 1203h0M736 1219h0M729 1225h0M707 1227h0M683 1214h0M655 1233h0M679 1248h0M681 1264h0M691 1284h0M686 1207h0M699 1207h0M712 1207h0M722 1207h0M731 1207h0M686 1213h0M712 1213h0M731 1213h0M278 1304h0M286 1312h0M293 1316h0M301 1321h0M274 1308h0M290 1321h0M314 1342h0M317 1355h0M320 1371h0M326 1377h0M308 1344h0M314 1373h0M326 1365h0M339 1355h0M349 1345h0M330 1369h0M353 1350h0M510 1323h0M521 1318h0M532 1313h0M512 1328h0M534 1319h0M513 1336h0M524 1336h0M535 1336h0M548 1334h0M513 1342h0M536 1342h0M494 1345h0M481 1355h0M490 1341h0M513 1358h0M522 1359h0M532 1360h0M542 1361h0M548 1368h0M512 1364h0M531 1366h0M544 1372h0M519 1374h0M513 1381h0M506 1387h0M522 1387h0M519 1403h0M535 1403h0M515 1370h0M503 1392h0M515 1407h0M513 1336h0M513 1347h0M513 1358h0M516 1366h0M519 1374h0M507 1336h0M507 1359h0M514 1376h0M535 1336h0M539 1349h0M542 1361h0M530 1337h0M536 1363h0M571 1323h0M580 1336h0M566 1326h0M436 1368h0M445 1368h0M455 1368h0M453 1379h0M452 1390h0M442 1398h0M432 1406h0M432 1397h0M432 1387h0M434 1377h0M436 1368h0M436 1374h0M450 1371h0M447 1387h0M433 1400h0M438 1388h0M442 1369h0M349 1275h0M357 1278h0M365 1281h0M347 1280h0M363 1287h0M386 1296h0M387 1304h0M387 1313h0M380 1296h0M382 1314h0M404 1233h0M394 1244h0M399 1229h0M1206 1098h0M1215 1091h0M1225 1085h0M1209 1103h0M1228 1090h0M1212 1117h0M1222 1114h0M1231 1111h0M1244 1107h0M1214 1123h0M1233 1116h0M1206 1101h0M1209 1109h0M1212 1117h0M1211 1127h0M1209 1136h0M1201 1143h0M1193 1149h0M1201 1154h0M1210 1158h0M1219 1162h0M1228 1149h0M1236 1157h0M1244 1165h0M1254 1165h0M1200 1103h0M1206 1118h0M1204 1133h0M1187 1150h0M1207 1163h0M1230 1155h0M1242 1171h0M1286 1175h0M1296 1188h0M1309 1188h0M1318 1194h0M1331 1188h0M1344 1188h0M1357 1197h0M1366 1210h0M1281 1179h0M1307 1194h0M1332 1194h0M1353 1202h0M1283 1191h0M1296 1188h0M1284 1197h0M1444 1262h0M1452 1268h0M1460 1275h0M1469 1287h0M1440 1266h0M1455 1279h0M1444 1278h0M1437 1286h0M1431 1294h0M1421 1297h0M1439 1274h0M1427 1289h0M1456 1296h0M1469 1287h0M1460 1301h0M1444 1278h0M1450 1287h0M1456 1296h0M1439 1281h0M1452 1299h0M1517 1191h0M1511 1204h0M1512 1188h0M1042 1107h0M1042 1124h0M1036 1107h0M843 737h0M648 901h0M661 893h0M677 887h0M627 934h0M812 1075h0M1252 1088h0M774 1091h0M790 1096h0M342 995h0M574 1156h0M664 1156h0M719 1149h0M773 1186h0M812 1075h0M309 1223h0M299 1271h0M322 1312h0M1254 1091h0M1337 1214h0M1418 1239h0M1071 1098h0M1003 1111h0" stroke="#000" stroke-width="16" stroke-linecap="round" fill="none"/><path d="M753 626h0M771 623h0M781 626h0M798 621h0M816 627h0M828 624h0M847 624h0M731 636h0M747 637h0M764 637h0M775 637h0M789 639h0M805 636h0M823 636h0M840 639h0M851 636h0M869 637h0M723 647h0M739 650h0M754 648h0M768 648h0M782 650h0M798 648h0M818 653h0M829 650h0M842 646h0M860 653h0M872 650h0M716 665h0M733 662h0M745 660h0M760 662h0M776 664h0M795 663h0M808 659h0M823 663h0M839 662h0M853 663h0M869 662h0M884 665h0M897 663h0M708 678h0M723 678h0M737 679h0M752 673h0M770 678h0M786 675h0M801 674h0M813 674h0M828 673h0M842 676h0M860 675h0M875 675h0M892 672h0M719 689h0M730 688h0M748 686h0M765 686h0M777 691h0M794 686h0M870 687h0M884 686h0M895 686h0M914 689h0M726 703h0M742 700h0M758 703h0M768 703h0M783 701h0M872 702h0M891 699h0M904 701h0M921 705h0M936 699h0M719 712h0M733 712h0M745 712h0M763 716h0M777 717h0M794 717h0M868 717h0M879 717h0M898 713h0M910 716h0M930 717h0M939 715h0M969 715h0M767 725h0M875 731h0M886 729h0M904 728h0M921 729h0M934 730h0M950 726h0M962 726h0M982 730h0M745 744h0M761 742h0M879 739h0M894 743h0M915 739h0M927 744h0M944 739h0M957 744h0M975 741h0M738 751h0M755 751h0M768 753h0M891 753h0M904 757h0M916 753h0M933 754h0M950 755h0M963 757h0M983 756h0M995 756h0M1006 755h0M1024 753h0M686 764h0M731 770h0M745 766h0M764 766h0M774 767h0M791 769h0M882 764h0M895 763h0M913 767h0M929 766h0M945 769h0M958 767h0M975 767h0M984 769h0M999 766h0M1016 769h0M1033 767h0M696 781h0M707 782h0M727 778h0M740 777h0M753 779h0M769 782h0M788 782h0M798 779h0M812 780h0M829 780h0M844 781h0M861 779h0M874 781h0M887 781h0M902 778h0M919 780h0M934 782h0M948 782h0M966 778h0M978 781h0M995 780h0M1012 777h0M1022 783h0M1038 781h0M1053 777h0M702 790h0M715 791h0M730 790h0M747 794h0M761 796h0M776 793h0M793 794h0M810 790h0M819 790h0M834 792h0M852 795h0M870 793h0M882 792h0M895 791h0M911 790h0M928 791h0M945 792h0M959 791h0M970 792h0M987 796h0M1000 789h0M1014 795h0M1029 796h0M1045 796h0M1061 796h0M694 804h0M709 808h0M728 803h0M741 808h0M757 808h0M771 806h0M781 804h0M802 805h0M814 807h0M829 804h0M843 809h0M859 807h0M876 805h0M889 806h0M905 806h0M917 805h0M936 804h0M949 808h0M966 806h0M977 807h0M996 803h0M1007 808h0M1024 808h0M1036 808h0M1055 804h0M1071 806h0M705 817h0M717 820h0M730 819h0M747 821h0M763 821h0M779 816h0M794 819h0M807 819h0M823 818h0M836 821h0M850 818h0M866 815h0M879 818h0M900 819h0M910 816h0M925 822h0M941 821h0M958 816h0M975 818h0M984 821h0M1003 816h0M1016 818h0M1030 820h0M1049 820h0M1060 822h0M1078 816h0M711 832h0M724 830h0M738 834h0M752 833h0M772 832h0M783 830h0M801 833h0M812 831h0M832 829h0M847 833h0M857 835h0M873 833h0M889 829h0M903 829h0M921 835h0M931 830h0M949 832h0M964 833h0M983 829h0M992 832h0M1011 834h0M1024 834h0M1043 834h0M1054 835h0M1070 834h0M704 847h0M718 842h0M731 846h0M749 842h0M763 846h0M779 842h0M794 845h0M810 842h0M824 848h0M839 843h0M852 848h0M868 844h0M881 845h0M894 844h0M915 847h0M925 846h0M945 843h0M956 845h0M970 846h0M989 844h0M1004 848h0M1015 846h0M1029 846h0M1044 844h0M1064 846h0M1076 842h0M711 860h0M724 858h0M738 860h0M754 857h0M771 855h0M781 860h0M797 858h0M814 857h0M828 859h0M841 856h0M862 859h0M875 856h0M886 855h0M908 861h0M919 859h0M934 860h0M949 860h0M961 860h0M979 861h0M992 855h0M1010 858h0M1022 855h0M1039 860h0M1055 859h0M1067 858h0M1081 854h0M1193 855h0M1206 855h0M1222 860h0M733 874h0M748 872h0M764 871h0M778 874h0M790 871h0M808 872h0M824 870h0M834 869h0M855 873h0M870 871h0M885 870h0M897 872h0M911 868h0M925 871h0M940 870h0M960 873h0M969 871h0M987 869h0M1000 868h0M1019 874h0M1031 873h0M1046 868h0M1064 870h0M1076 870h0M1095 868h0M1195 873h0M1212 872h0M1225 871h0M737 884h0M754 881h0M768 886h0M788 883h0M797 884h0M812 883h0M827 884h0M843 882h0M858 882h0M876 886h0M888 881h0M905 882h0M917 885h0M935 883h0M952 884h0M965 884h0M982 887h0M992 884h0M1011 886h0M1027 881h0M1037 886h0M1053 887h0M1070 884h0M1083 880h0M1099 885h0M1112 882h0M1130 884h0M1186 886h0M1207 882h0M1219 885h0M1235 885h0M807 894h0M824 894h0M836 899h0M851 896h0M870 899h0M883 898h0M896 898h0M914 894h0M926 897h0M940 900h0M959 893h0M972 897h0M984 899h0M1001 895h0M1016 894h0M1033 900h0M1047 894h0M1064 899h0M1077 898h0M1090 899h0M1110 894h0M1121 895h0M1134 894h0M1182 900h0M1199 895h0M1209 898h0M1224 896h0M1239 897h0M832 913h0M845 908h0M861 913h0M873 908h0M887 909h0M906 910h0M917 908h0M932 911h0M947 908h0M964 912h0M982 909h0M997 908h0M1008 909h0M1025 911h0M1041 908h0M1052 907h0M1067 910h0M1088 912h0M1101 910h0M1113 913h0M1130 913h0M1145 907h0M1157 912h0M1172 909h0M1189 909h0M1208 912h0M1217 913h0M1235 907h0M837 920h0M852 920h0M867 924h0M880 921h0M898 920h0M911 922h0M929 924h0M939 922h0M957 922h0M971 922h0M990 923h0M1005 921h0M1017 924h0M1031 926h0M1046 925h0M1065 920h0M1076 921h0M1092 926h0M1108 923h0M1120 922h0M1134 925h0M1149 924h0M1164 923h0M844 938h0M858 934h0M873 934h0M888 939h0M904 934h0M919 936h0M933 935h0M951 937h0M966 937h0M979 934h0M995 933h0M1011 938h0M1026 933h0M1041 935h0M1052 939h0M1069 933h0M1084 937h0M1103 933h0M1117 933h0M1127 933h0M852 952h0M869 947h0M883 950h0M900 950h0M915 952h0M928 948h0M944 951h0M956 950h0M975 949h0M986 946h0M1003 947h0M1015 946h0M1034 951h0M1045 947h0M1061 949h0M1074 946h0M1094 952h0M1104 949h0M878 959h0M893 963h0M905 961h0M919 961h0M934 961h0M951 964h0M967 960h0M977 963h0M996 959h0M1010 964h0M1023 958h0M1041 962h0M1058 962h0M1067 965h0M1088 965h0M1100 964h0M1112 960h0M1130 959h0M1147 961h0M1159 965h0M900 974h0M913 973h0M924 971h0M939 973h0M960 976h0M973 972h0M985 976h0M1004 971h0M1020 975h0M1030 978h0M1048 976h0M1063 973h0M1080 976h0M1089 974h0M1108 976h0M1125 978h0M1136 972h0M1151 972h0M1170 973h0M906 991h0M921 986h0M935 986h0M953 989h0M964 990h0M983 989h0M996 985h0M1009 986h0M1023 989h0M1042 989h0M1056 989h0M1067 985h0M1088 988h0M1099 991h0M1115 985h0M1131 984h0M1144 986h0M1161 991h0M1175 990h0M1190 984h0M821 1002h0M836 1003h0M924 999h0M941 1003h0M954 1003h0M975 1002h0M990 997h0M1002 1003h0M1020 1003h0M1032 999h0M1044 1001h0M1061 1004h0M1079 999h0M1093 1000h0M1104 998h0M1125 1001h0M1138 999h0M1153 998h0M1166 997h0M1185 1003h0M1197 1001h0M802 1014h0M812 1014h0M827 1013h0M845 1010h0M860 1010h0M977 1013h0M996 1017h0M1007 1016h0M1027 1011h0M1041 1013h0M1057 1013h0M1070 1011h0M1083 1012h0M1102 1016h0M1116 1013h0M1131 1013h0M1147 1016h0M1162 1014h0M1171 1017h0M1189 1011h0M1207 1016h0M809 1024h0M821 1023h0M836 1024h0M853 1028h0M865 1025h0M973 1030h0M987 1027h0M1002 1030h0M1017 1030h0M1031 1024h0M1104 1023h0M1122 1028h0M1135 1027h0M1150 1026h0M1168 1026h0M1185 1030h0M1194 1028h0M1210 1029h0M380 1039h0M397 1040h0M812 1041h0M829 1042h0M846 1040h0M856 1040h0M976 1042h0M994 1037h0M1008 1037h0M1023 1040h0M1037 1043h0M1117 1037h0M1131 1042h0M1146 1043h0M1159 1040h0M1172 1041h0M1187 1039h0M1208 1040h0M1217 1040h0M373 1056h0M387 1049h0M402 1054h0M824 1049h0M840 1052h0M850 1053h0M973 1051h0M989 1052h0M1005 1055h0M1019 1055h0M1029 1049h0M1123 1056h0M1140 1056h0M1155 1049h0M1166 1056h0M1185 1053h0M1196 1049h0M1213 1055h0M364 1064h0M378 1063h0M393 1067h0M407 1063h0M512 1062h0M532 1066h0M545 1067h0M977 1066h0M997 1067h0M1011 1068h0M1025 1065h0M1114 1065h0M1131 1066h0M1141 1063h0M1160 1068h0M1174 1069h0M1188 1068h0M1203 1062h0M1223 1067h0M401 1076h0M521 1081h0M535 1076h0M550 1081h0M1104 1080h0M1122 1081h0M1134 1078h0M1149 1078h0M1164 1076h0M1181 1080h0M1200 1078h0M1210 1075h0M1225 1080h0M1099 1089h0M1118 1094h0M1130 1091h0M1145 1089h0M1163 1091h0M1178 1094h0M1187 1095h0M1207 1089h0M1217 1094h0M1233 1092h0M1249 1088h0M487 1147h0M434 1154h0M448 1159h0M465 1158h0M476 1158h0M413 1173h0M422 1171h0M441 1172h0M454 1166h0M473 1173h0M485 1171h0M694 1170h0M429 1181h0M449 1179h0M462 1183h0M476 1179h0M672 1184h0M688 1180h0M702 1183h0M716 1184h0M730 1180h0M664 1194h0M682 1194h0M695 1194h0M706 1193h0M722 1193h0M659 1212h0M673 1208h0M687 1206h0M699 1208h0M715 1208h0M733 1206h0M668 1221h0M683 1222h0M694 1220h0M707 1224h0M725 1219h0M741 1225h0M675 1232h0M689 1235h0M699 1238h0M715 1232h0M716 641h0M727 636h0M738 631h0M749 625h0M761 619h0M770 615h0M780 612h0M793 617h0M806 622h0M825 622h0M838 620h0M851 619h0M862 627h0M873 635h0M883 642h0M892 650h0M902 657h0M904 672h0M905 686h0M918 690h0M931 695h0M944 699h0M944 710h0M944 721h0M960 712h0M973 717h0M986 721h0M986 734h0M986 747h0M995 749h0M1005 750h0M1017 751h0M1029 752h0M1040 754h0M1042 763h0M1044 773h0M1060 779h0M1069 792h0M1079 805h0M1079 821h0M1079 837h0M1084 848h0M1089 860h0M1101 869h0M1114 879h0M1127 879h0M1140 879h0M1143 892h0M1146 905h0M1159 903h0M1172 901h0M1182 889h0M1184 877h0M1186 865h0M1188 853h0M1199 851h0M1210 849h0M1220 847h0M1225 858h0M1230 869h0M1241 874h0M1252 879h0M1249 889h0M1246 898h0M1236 914h0M1220 921h0M1204 911h0M1191 916h0M1179 921h0M1169 924h0M1159 927h0M1146 927h0M1143 940h0M1127 946h0M1116 950h0M1105 953h0M1111 966h0M1122 962h0M1134 959h0M1146 961h0M1159 962h0M1169 972h0M1179 982h0M1188 985h0M1198 988h0M1201 999h0M1204 1011h0M1217 1024h0M1217 1036h0M1217 1049h0M1221 1060h0M1226 1071h0M1230 1081h0M1244 1085h0M1259 1088h0M1262 1100h0M1249 1100h0M1235 1100h0M1222 1100h0M1209 1100h0M1195 1100h0M1182 1100h0M1168 1100h0M1155 1100h0M1142 1100h0M1128 1100h0M1115 1100h0M1101 1100h0M1098 1087h0M1095 1075h0M1108 1065h0M1121 1056h0M1124 1043h0M1127 1030h0M1124 1019h0M1121 1007h0M1111 1012h0M1101 1017h0M1089 1020h0M1076 1024h0M1066 1020h0M1056 1017h0M1050 1009h0M1044 1001h0M1034 996h0M1024 991h0M1034 1004h0M1044 1017h0M1044 1030h0M1044 1043h0M1044 1056h0M1035 1064h0M1027 1072h0M1016 1073h0M1005 1075h0M992 1073h0M979 1072h0M974 1060h0M970 1049h0M963 1036h0M968 1024h0M973 1011h0M954 1011h0M937 1009h0M921 1007h0M912 995h0M901 995h0M889 995h0M883 982h0M889 966h0M876 962h0M864 959h0M852 954h0M841 950h0M835 934h0M827 926h0M819 917h0M814 908h0M809 898h0M793 898h0M782 895h0M770 892h0M756 890h0M741 889h0M730 885h0M719 882h0M716 869h0M703 856h0M700 844h0M695 834h0M690 824h0M692 813h0M693 802h0M696 786h0M680 776h0M671 770h0M674 760h0M690 757h0M703 770h0M712 771h0M722 773h0M729 763h0M735 754h0M738 744h0M746 737h0M754 731h0M761 725h0M751 721h0M737 723h0M722 725h0M712 721h0M712 709h0M722 696h0M709 683h0M706 667h0M716 654h0M716 641h0M796 1011h0M806 1004h0M815 998h0M825 991h0M836 996h0M846 1000h0M857 1004h0M867 1009h0M876 1014h0M875 1028h0M873 1043h0M864 1052h0M854 1062h0M843 1059h0M831 1056h0M820 1052h0M809 1049h0M804 1040h0M799 1030h0M798 1020h0M796 1011h0M368 1040h0M379 1037h0M391 1034h0M399 1042h0M408 1051h0M416 1059h0M415 1071h0M413 1082h0M399 1077h0M384 1072h0M371 1072h0M359 1072h0M362 1061h0M365 1051h0M368 1040h0M506 1062h0M518 1058h0M529 1053h0M542 1059h0M555 1066h0M556 1075h0M558 1085h0M547 1088h0M535 1091h0M524 1090h0M513 1088h0M510 1075h0M506 1062h0M799 1011h0M809 1005h0M818 998h0M828 992h0M837 997h0M847 1002h0M857 1008h0M873 1017h0M868 1032h0M863 1046h0M855 1053h0M847 1059h0M837 1056h0M828 1053h0M817 1050h0M805 1046h0M799 1030h0M799 1011h0M664 1181h0M675 1177h0M685 1173h0M696 1169h0M710 1173h0M724 1177h0M738 1181h0M740 1196h0M742 1211h0M744 1226h0M731 1231h0M719 1235h0M706 1239h0M691 1239h0M676 1239h0M661 1239h0M659 1226h0M657 1214h0M660 1203h0M662 1192h0M664 1181h0M455 1143h0M471 1141h0M487 1140h0M487 1154h0M487 1167h0M487 1181h0M476 1186h0M466 1190h0M455 1194h0M444 1189h0M432 1185h0M421 1180h0M410 1175h0M416 1167h0M423 1159h0M434 1154h0M444 1148h0M455 1143h0M1000 950h0M1014 950h0M1028 950h0M1041 950h0M1055 950h0M1069 950h0M1083 950h0M1096 950h0M1108 953h0M1120 955h0M1131 958h0M1143 960h0M1154 963h0M1167 970h0M1180 978h0M1193 985h0M1198 998h0M1204 1011h0M1209 1024h0M1207 1040h0M1206 1056h0M1196 1067h0M1186 1079h0M1174 1082h0M1161 1085h0M1149 1091h0M1138 1098h0M1127 1094h0M1117 1089h0M1106 1085h0M1096 1075h0M1106 1071h0M1116 1066h0M1119 1056h0M1122 1046h0M1114 1038h0M1105 1029h0M1096 1021h0M1080 1021h0M1064 1021h0M1051 1017h0M1039 1014h0M1039 1030h0M1039 1046h0M1032 1059h0M1026 1072h0M1006 1072h0M1000 1062h0M1000 1050h0M1000 1037h0M1000 1025h0M1000 1012h0M1000 1000h0M1000 987h0M1000 975h0M1000 962h0M1000 950h0M805 712h0M792 719h0M779 727h0M772 736h0M765 745h0M777 751h0M790 756h0M796 765h0M801 774h0M816 776h0M830 778h0M845 777h0M860 776h0M874 774h0M876 762h0M878 749h0M869 742h0M860 734h0M864 723h0M867 712h0M860 699h0M853 686h0M839 686h0M825 686h0M809 684h0M794 683h0M799 697h0M805 712h0M587 989h0M576 993h0M564 998h0M555 1002h0M545 1006h0M535 1017h0M526 1024h0M516 1030h0M508 1035h0M500 1040h0M490 1048h0M481 1056h0M474 1064h0M468 1072h0M458 1082h0M455 1090h0M452 1098h0M447 1111h0M442 1124h0M584 983h0M562 993h0M541 1002h0M522 1019h0M505 1030h0M486 1043h0M470 1060h0M453 1078h0M446 1096h0M437 1121h0M558 1030h0M542 1030h0M526 1034h0M516 1040h0M506 1046h0M558 1024h0M524 1028h0M503 1041h0M522 1117h0M514 1122h0M506 1127h0M497 1133h0M489 1128h0M481 1124h0M477 1133h0M474 1143h0M468 1156h0M461 1169h0M455 1181h0M463 1188h0M471 1194h0M474 1204h0M477 1214h0M471 1226h0M484 1236h0M495 1238h0M506 1239h0M519 1112h0M503 1122h0M492 1123h0M472 1131h0M462 1153h0M449 1182h0M466 1198h0M472 1213h0M481 1241h0M506 1245h0M484 1236h0M479 1249h0M474 1262h0M465 1265h0M455 1268h0M445 1270h0M436 1271h0M431 1281h0M426 1291h0M432 1297h0M439 1304h0M455 1304h0M458 1296h0M461 1287h0M474 1284h0M486 1279h0M497 1275h0M500 1291h0M497 1304h0M478 1234h0M470 1258h0M454 1262h0M432 1267h0M420 1291h0M437 1309h0M464 1298h0M476 1290h0M493 1279h0M491 1302h0M410 1165h0M426 1169h0M431 1177h0M436 1185h0M444 1180h0M452 1175h0M461 1175h0M471 1175h0M482 1175h0M492 1175h0M503 1175h0M519 1172h0M529 1169h0M539 1165h0M548 1170h0M558 1175h0M409 1171h0M426 1180h0M447 1185h0M461 1181h0M482 1181h0M504 1181h0M531 1174h0M546 1176h0M532 1156h0M539 1165h0M527 1159h0M686 1040h0M683 1056h0M696 1059h0M709 1062h0M698 1067h0M687 1071h0M677 1075h0M685 1083h0M693 1091h0M696 1099h0M699 1107h0M701 1116h0M702 1125h0M696 1135h0M681 1039h0M695 1065h0M696 1061h0M671 1074h0M688 1095h0M693 1109h0M697 1124h0M775 1091h0M783 1096h0M791 1101h0M789 1114h0M789 1125h0M772 1097h0M785 1103h0M783 1125h0M619 1136h0M629 1140h0M638 1143h0M632 1156h0M620 1159h0M609 1162h0M600 1175h0M611 1180h0M622 1185h0M633 1186h0M645 1188h0M654 1197h0M664 1204h0M669 1196h0M674 1188h0M683 1185h0M693 1181h0M702 1177h0M712 1172h0M725 1176h0M738 1180h0M617 1142h0M632 1144h0M619 1153h0M594 1176h0M620 1190h0M642 1193h0M665 1210h0M677 1193h0M695 1187h0M712 1178h0M736 1186h0M674 1188h0M686 1190h0M698 1193h0M710 1195h0M722 1197h0M731 1207h0M741 1217h0M741 1230h0M729 1231h0M717 1232h0M706 1233h0M694 1226h0M683 1220h0M672 1226h0M661 1233h0M672 1238h0M683 1244h0M685 1253h0M686 1262h0M691 1271h0M696 1281h0M672 1194h0M696 1199h0M719 1203h0M736 1219h0M729 1225h0M707 1227h0M683 1214h0M655 1233h0M679 1248h0M681 1264h0M691 1284h0M686 1207h0M699 1207h0M712 1207h0M722 1207h0M731 1207h0M686 1213h0M712 1213h0M731 1213h0M278 1304h0M286 1312h0M293 1316h0M301 1321h0M274 1308h0M290 1321h0M314 1342h0M317 1355h0M320 1371h0M326 1377h0M308 1344h0M314 1373h0M326 1365h0M339 1355h0M349 1345h0M330 1369h0M353 1350h0M510 1323h0M521 1318h0M532 1313h0M512 1328h0M534 1319h0M513 1336h0M524 1336h0M535 1336h0M548 1334h0M513 1342h0M536 1342h0M494 1345h0M481 1355h0M490 1341h0M513 1358h0M522 1359h0M532 1360h0M542 1361h0M548 1368h0M512 1364h0M531 1366h0M544 1372h0M519 1374h0M513 1381h0M506 1387h0M522 1387h0M519 1403h0M535 1403h0M515 1370h0M503 1392h0M515 1407h0M513 1336h0M513 1347h0M513 1358h0M516 1366h0M519 1374h0M507 1336h0M507 1359h0M514 1376h0M535 1336h0M539 1349h0M542 1361h0M530 1337h0M536 1363h0M571 1323h0M580 1336h0M566 1326h0M436 1368h0M445 1368h0M455 1368h0M453 1379h0M452 1390h0M442 1398h0M432 1406h0M432 1397h0M432 1387h0M434 1377h0M436 1368h0M436 1374h0M450 1371h0M447 1387h0M433 1400h0M438 1388h0M442 1369h0M349 1275h0M357 1278h0M365 1281h0M347 1280h0M363 1287h0M386 1296h0M387 1304h0M387 1313h0M380 1296h0M382 1314h0M404 1233h0M394 1244h0M399 1229h0M1206 1098h0M1215 1091h0M1225 1085h0M1209 1103h0M1228 1090h0M1212 1117h0M1222 1114h0M1231 1111h0M1244 1107h0M1214 1123h0M1233 1116h0M1206 1101h0M1209 1109h0M1212 1117h0M1211 1127h0M1209 1136h0M1201 1143h0M1193 1149h0M1201 1154h0M1210 1158h0M1219 1162h0M1228 1149h0M1236 1157h0M1244 1165h0M1254 1165h0M1200 1103h0M1206 1118h0M1204 1133h0M1187 1150h0M1207 1163h0M1230 1155h0M1242 1171h0M1286 1175h0M1296 1188h0M1309 1188h0M1318 1194h0M1331 1188h0M1344 1188h0M1357 1197h0M1366 1210h0M1281 1179h0M1307 1194h0M1332 1194h0M1353 1202h0M1283 1191h0M1296 1188h0M1284 1197h0M1444 1262h0M1452 1268h0M1460 1275h0M1469 1287h0M1440 1266h0M1455 1279h0M1444 1278h0M1437 1286h0M1431 1294h0M1421 1297h0M1439 1274h0M1427 1289h0M1456 1296h0M1469 1287h0M1460 1301h0M1444 1278h0M1450 1287h0M1456 1296h0M1439 1281h0M1452 1299h0M1517 1191h0M1511 1204h0M1512 1188h0M1042 1107h0M1042 1124h0M1036 1107h0M843 737h0M648 901h0M661 893h0M677 887h0M627 934h0M812 1075h0M1252 1088h0M774 1091h0M790 1096h0M342 995h0M574 1156h0M664 1156h0M719 1149h0M773 1186h0M812 1075h0M309 1223h0M299 1271h0M322 1312h0M1254 1091h0M1337 1214h0M1418 1239h0M1071 1098h0M1003 1111h0" stroke="#d600f6" stroke-width="7.8" stroke-linecap="round" fill="none"/></g></svg><div style="position:absolute;left:73px;top:487px;width:100px;height:99px;background:#fff;border-bottom:3px solid #6e6e6e"></div><svg style="position:absolute;left:102px;top:511px" width="46" height="46" viewBox="0 0 46 46"><path d="M5 41.5V21.5H8.2V5H15.5L38.5 21.5V41.5H27V28.5H15V41.5Z" fill="none" stroke="#707070" stroke-width="3"/></svg><div style="position:absolute;left:1256px;top:487px;width:476px;height:92px;background:#fff"></div><svg style="position:absolute;left:1265px;top:505px" width="70" height="50"><g fill="#d400f5" stroke="#111" stroke-width="3"><circle cx="14.5" cy="27.5" r="7.5"/><circle cx="39" cy="36" r="7.5"/><circle cx="57.5" cy="15" r="7.5"/></g></svg><div style="position:absolute;left:1363px;top:510px;font-size:39.5px;color:#555;white-space:nowrap;line-height:46px">WeatherRelate...</div><svg style="position:absolute;left:1688px;top:508px" width="24" height="44"><path d="M3 2l19 21L3 44" fill="none" stroke="#666" stroke-width="3"/></svg>
<svg style="position:absolute;left:1822px;top:455px" width="1844" height="1118" viewBox="1822 455 1844 1118"><rect x="1822" y="455" width="1844" height="1118" fill="#e9eee2"/><filter id="tx2" x="0" y="0" width="100%" height="100%"><feTurbulence type="fractalNoise" baseFrequency="0.04" numOctaves="3" seed="11"/><feColorMatrix values="0 0 0 0 1  0 0 0 0 1  0 0 0 0 1  2.2 0 0 0 -0.9"/></filter><rect x="1822" y="455" width="1844" height="1118" filter="url(#tx2)" opacity="0.6"/><path d="M2629 616 L2747 582 L2747 837 L2671 820 L2637 752 L2620 676Z" fill="#dfddd2" opacity="0.4"/><path d="M2744 553 L2808 540 L2871 565 L2922 582 L2935 633 L2905 667 L2922 710 L2914 752 L2884 795 L2871 829 L2829 837 L2786 829 L2744 824Z" fill="#dfddd2" opacity="0.4"/><path d="M3254 676 L3305 659 L3356 693 L3347 727 L3296 727Z" fill="#dfddd2" opacity="0.4"/><path d="M3109 1382 L3147 1387 L3169 1421 L3160 1472 L3126 1472 L3113 1429Z" fill="#dfddd2" opacity="0.4"/><path d="M1822 650 L1822 727 L1847 718 L1856 676Z" fill="#dfddd2" opacity="0.4"/><path d="M1822 820 L1907 820 L1924 875 L1822 880Z" fill="#dfddd2" opacity="0.4"/><path d="M2111 667 L2145 672 L2141 795 L2119 795 L2115 880 L2039 880 L2039 791 L2000 795 L2000 761 L2060 718 L2111 706Z" fill="#d0e0bf" opacity="1"/><path d="M1822 985 L1907 973 L1949 943 L1988 931 L2034 922 L2060 965 L2060 1013 L2009 1013 L1983 1034 L1958 1102 L1898 1111 L1898 1174 L1839 1179 L1839 1247 L1822 1247Z" fill="#d0e0bf" opacity="1"/><path d="M3067 1119 L3101 1115 L3126 1132 L3143 1174 L3169 1196 L3194 1157 L3211 1119 L3224 1068 L3271 1055 L3296 1038 L3313 1047 L3296 1098 L3283 1140 L3275 1196 L3262 1234 L3245 1268 L3228 1285 L3211 1251 L3194 1268 L3169 1264 L3160 1289 L3126 1310 L3118 1293 L3084 1234 L3071 1191 L3063 1140Z" fill="#d0e0bf" opacity="1"/><path d="M3300 854 L3360 829 L3381 795 L3398 791 L3390 808 L3436 846 L3432 880 L3457 892 L3381 943 L3364 965 L3339 922Z" fill="#d0e0bf" opacity="1"/><path d="M1988 527 L2022 502 L2060 506 L2098 497 L2128 506 L2145 519 L2119 540 L2085 553 L2060 540 L2026 536 L2005 540Z" fill="#bde6f7" opacity="0.75"/><path d="M2561 531 L2582 544 L2603 561 L2629 540 L2650 506 L2648 548 L2625 570 L2595 578 L2578 612 L2574 578Z" fill="#bde6f7" opacity="0.75"/><path d="M2935 455 L3020 455 L3007 480 L3024 497 L2999 519 L3016 540 L2982 544 L2927 540 L2914 523 L2922 497 L2931 472Z" fill="#bde6f7" opacity="0.75"/><path d="M2264 1293 L2332 1276 L2366 1242 L2391 1208 L2383 1183 L2361 1191 L2349 1140 L2357 1191 L2374 1217 L2340 1251 L2323 1268 L2272 1285 L2264 1310 L2289 1344 L2306 1387 L2315 1378 L2298 1336Z" fill="#bde6f7" opacity="0.75"/><path d="M2047 1123 L2077 1098 L2111 1089 L2145 1072 L2119 1106 L2085 1123 L2073 1149 L2051 1140Z" fill="#bde6f7" opacity="0.75"/><path d="M1822 1456 L1836 1439 L1857 1421 L1888 1404 L1905 1397 L1919 1357 L1933 1349 L1943 1352 L1926 1369 L1919 1404 L1943 1421 L1954 1448 L1943 1474 L1961 1491 L1975 1501 L1954 1508 L1933 1517 L1905 1526 L1895 1560 L1905 1573 L1874 1573 L1867 1526 L1843 1517 L1822 1508Z" fill="#bde6f7" opacity="0.75"/><path d="M2298 1535 L2332 1527 L2370 1540 L2332 1548Z" fill="#bde6f7" opacity="0.75"/><path d="M3360 1013 L3407 1013 L3424 1038 L3445 1055 L3441 1098 L3453 1111 L3407 1140 L3381 1153 L3373 1174 L3347 1191 L3313 1200 L3339 1213 L3407 1204 L3415 1225 L3407 1234 L3373 1217 L3305 1208 L3313 1191 L3364 1166 L3373 1140 L3424 1106 L3432 1077 L3390 1055 L3381 1030Z" fill="#bde6f7" opacity="0.75"/><path d="M3033 1068 L3058 1060 L3050 1094 L3037 1098Z" fill="#bde6f7" opacity="0.75"/><path d="M3347 994 L3407 990 L3407 1015 L3347 1015Z" fill="#bde6f7" opacity="0.75"/><g fill="none" stroke="#a3d9ee" stroke-width="2.6" stroke-linejoin="round" stroke-linecap="round"><path d="M2400 757 C2392 752 2366 733 2353 731 C2340 729 2334 741 2323 744 C2313 747 2299 745 2289 748 C2279 751 2270 754 2264 761 C2257 767 2257 779 2251 786 C2245 793 2237 796 2230 803 C2222 810 2212 820 2204 829 C2196 838 2190 850 2183 858 C2176 867 2168 871 2162 880 C2155 888 2152 904 2145 909 C2138 915 2131 912 2119 914 C2108 916 2085 915 2077 922 C2068 929 2071 941 2068 956 C2065 972 2061 1005 2060 1015"/><path d="M2747 693 C2741 698 2719 717 2710 727 C2701 737 2697 742 2693 752 C2688 762 2691 776 2684 786 C2678 796 2665 802 2654 812 C2644 822 2632 834 2620 846 C2609 857 2597 870 2586 880 C2576 890 2567 897 2557 905 C2546 914 2532 922 2523 931 C2514 939 2506 947 2502 956 C2497 965 2503 978 2497 986 C2492 994 2474 998 2468 1003 C2461 1008 2460 1013 2459 1015"/><path d="M2217 485 C2219 488 2221 501 2230 506 C2238 511 2256 516 2268 514 C2280 513 2293 506 2302 497 C2310 489 2316 469 2319 463"/><path d="M1949 574 C1958 573 1989 568 2000 565 C2012 563 2020 554 2017 557 C2015 560 1985 571 1983 582 C1982 594 2015 619 2009 625 C2003 631 1965 614 1949 616 C1934 619 1928 625 1915 638 C1903 650 1880 684 1873 693"/><path d="M2944 667 C2940 676 2926 701 2922 718 C2919 736 2920 755 2922 774 C2924 792 2925 815 2935 829 C2945 843 2968 844 2982 858 C2995 873 3007 896 3016 914 C3024 931 3029 948 3033 965 C3037 982 3040 1007 3041 1015"/><path d="M2808 863 C2817 866 2845 870 2863 880 C2881 890 2901 908 2914 922 C2927 936 2934 949 2939 965 C2945 980 2946 1007 2948 1015"/><path d="M3126 888 C3128 892 3124 901 3135 914 C3145 926 3174 948 3190 965 C3206 982 3222 1007 3228 1015"/><path d="M3181 582 C3184 589 3182 611 3194 625 C3206 639 3237 653 3254 667 C3271 682 3282 696 3296 710 C3310 724 3327 735 3339 752 C3350 770 3360 795 3364 816 C3368 837 3363 861 3364 880 C3365 899 3372 908 3373 931 C3373 953 3369 1001 3368 1015"/><path d="M3644 510 L3669 540"/><path d="M2922 544 C2920 552 2911 576 2905 591 C2900 606 2901 622 2888 633 C2876 645 2846 655 2829 659 C2812 662 2801 650 2786 655 C2772 659 2751 679 2744 684"/><path d="M2451 1013 C2438 1023 2390 1053 2374 1072 C2358 1092 2356 1114 2353 1132 C2350 1150 2356 1174 2357 1183"/><path d="M2306 1387 C2307 1392 2306 1407 2310 1421 C2315 1435 2326 1455 2332 1472 C2337 1489 2340 1506 2344 1523 C2349 1540 2355 1565 2357 1573"/><path d="M2060 1013 C2063 1021 2075 1043 2077 1064 C2078 1085 2070 1121 2068 1140 C2067 1160 2065 1169 2068 1183 C2071 1197 2080 1211 2085 1225 C2090 1240 2099 1254 2098 1268 C2097 1282 2086 1298 2077 1310 C2068 1323 2053 1337 2043 1344 C2032 1351 2027 1353 2013 1353 C1999 1353 1973 1343 1958 1344 C1942 1346 1928 1353 1920 1361 C1911 1370 1909 1390 1907 1395"/><path d="M2747 1111 C2739 1124 2709 1165 2697 1191 C2684 1218 2676 1241 2671 1268 C2667 1295 2668 1332 2671 1353 C2675 1374 2680 1378 2693 1395 C2705 1412 2738 1445 2747 1455"/><path d="M2999 1013 C3006 1022 3031 1051 3041 1068 C3051 1086 3054 1104 3058 1119 C3063 1135 3065 1144 3067 1162 C3068 1179 3063 1208 3067 1225 C3071 1243 3084 1254 3092 1268 C3101 1282 3112 1296 3118 1310 C3123 1324 3121 1339 3126 1353 C3132 1367 3141 1381 3152 1395 C3162 1409 3183 1424 3190 1438 C3197 1452 3195 1458 3194 1480 C3193 1503 3187 1558 3186 1573"/><path d="M3407 1234 C3407 1241 3404 1261 3411 1276 C3417 1291 3431 1307 3445 1323 C3458 1339 3477 1355 3491 1374 C3506 1393 3520 1420 3530 1438 C3540 1455 3545 1458 3551 1480 C3557 1503 3565 1558 3568 1573"/><path d="M3593 1013 C3600 1027 3623 1074 3636 1098 C3648 1122 3663 1147 3669 1157"/><path d="M2744 1455 C2751 1458 2772 1465 2786 1472 C2801 1479 2815 1489 2829 1497 C2843 1506 2857 1514 2871 1523 C2886 1531 2903 1540 2914 1548 C2924 1557 2932 1569 2935 1573"/><path d="M2748 1055 C2749 1063 2753 1087 2752 1098 C2752 1109 2745 1119 2744 1123"/><path d="M3224 1013 C3226 1019 3228 1038 3237 1047 C3245 1056 3265 1070 3275 1068 C3285 1067 3293 1043 3296 1038"/></g><g fill="none" stroke="#cdcdcd" stroke-width="4.5" stroke-linejoin="round"><path d="M1822 931 C1843 927 1907 915 1949 909 C1992 904 2034 903 2077 897 C2119 891 2155 882 2204 873 C2254 865 2314 852 2374 846 C2434 839 2523 840 2565 833 C2607 826 2594 811 2625 803 C2655 795 2727 789 2747 786"/><path d="M2272 455 C2275 469 2289 512 2289 540 C2289 568 2274 609 2272 625 C2271 641 2282 632 2281 638 C2279 643 2265 647 2264 659 C2262 671 2268 694 2272 710 C2276 725 2283 740 2289 752 C2296 765 2305 769 2310 786 C2315 803 2316 837 2319 854 C2322 871 2320 875 2327 888 C2335 901 2359 924 2366 931"/><path d="M2412 510 C2424 509 2460 503 2480 504 C2501 505 2526 513 2535 514"/><path d="M2285 638 C2302 639 2365 637 2387 646 C2409 655 2400 682 2417 693 C2433 703 2463 704 2485 710 C2506 715 2528 720 2544 727 C2560 734 2571 741 2582 752 C2594 764 2607 788 2612 795"/><path d="M2506 455 C2512 462 2538 483 2544 497 C2550 512 2536 524 2540 540 C2543 556 2552 580 2565 591 C2579 602 2606 595 2620 604 C2635 612 2644 627 2654 642 C2665 657 2679 684 2684 693"/><path d="M1847 655 C1855 661 1884 666 1894 693 C1904 720 1899 788 1907 816 C1915 844 1931 845 1941 858 C1951 872 1962 890 1966 897"/><path d="M1962 489 C1967 492 1981 505 1992 506 C2002 507 2005 496 2026 493 C2047 490 2104 490 2119 489"/><path d="M3075 455 C3060 476 3005 554 2982 582 C2958 611 2946 611 2935 625 C2924 639 2932 652 2914 667 C2896 683 2857 711 2829 718 C2801 725 2758 711 2744 710"/><path d="M3160 557 C3147 560 3111 570 3084 578 C3057 587 3025 599 2999 608 C2973 617 2939 629 2927 633"/><path d="M2744 850 C2769 851 2850 846 2893 854 C2935 863 2956 890 2999 901 C3041 912 3105 910 3147 918 C3190 926 3201 941 3254 948 C3307 954 3397 949 3466 956 C3535 963 3635 984 3669 990"/><path d="M3203 693 C3215 696 3258 714 3279 714 C3300 714 3306 709 3330 693 C3354 677 3394 629 3424 616 C3453 604 3480 622 3508 616 C3537 611 3579 588 3593 582"/><path d="M3283 578 C3288 593 3307 643 3309 667 C3311 692 3300 709 3296 727 C3292 745 3285 755 3283 774 C3282 792 3290 809 3288 837 C3285 866 3269 914 3271 943 C3272 973 3292 1003 3296 1015"/><path d="M3602 582 C3610 597 3642 632 3653 667 C3664 703 3666 774 3669 795"/><path d="M2829 718 L2829 837"/><path d="M2085 1013 C2091 1024 2109 1057 2119 1077 C2129 1097 2134 1111 2145 1132 C2155 1152 2172 1183 2183 1200 C2194 1217 2203 1220 2208 1234 C2214 1248 2221 1269 2217 1285 C2213 1300 2193 1309 2187 1327 C2182 1346 2190 1373 2183 1395 C2176 1418 2148 1445 2145 1463 C2141 1481 2153 1491 2162 1501 C2170 1511 2189 1511 2196 1523 C2203 1535 2203 1565 2204 1573"/><path d="M1822 1340 C1833 1348 1864 1375 1886 1387 C1907 1399 1925 1398 1949 1412 C1974 1426 2006 1450 2034 1472 C2063 1494 2099 1527 2119 1544 C2139 1561 2148 1568 2153 1573"/><path d="M2510 1179 C2502 1189 2475 1222 2459 1242 C2443 1263 2434 1283 2417 1302 C2400 1320 2375 1333 2357 1353 C2339 1373 2327 1399 2310 1421 C2293 1442 2271 1458 2255 1480 C2239 1503 2220 1544 2213 1557"/><path d="M2434 1310 C2434 1323 2439 1366 2434 1387 C2428 1408 2407 1418 2400 1438 C2393 1458 2387 1483 2391 1506 C2395 1528 2419 1562 2425 1573"/><path d="M2400 1514 C2410 1506 2435 1478 2459 1463 C2483 1448 2496 1436 2544 1425 C2592 1414 2713 1400 2747 1395"/><path d="M2349 1013 C2350 1020 2353 1041 2357 1055 C2361 1070 2371 1091 2374 1098"/><path d="M2893 1089 C2898 1104 2910 1146 2922 1174 C2934 1203 2945 1235 2965 1259 C2985 1283 3018 1300 3041 1319 C3065 1337 3084 1353 3105 1370 C3126 1387 3151 1402 3169 1421 C3186 1439 3201 1463 3211 1480 C3222 1497 3218 1507 3232 1523 C3247 1538 3285 1565 3296 1573"/><path d="M2744 1162 L2914 1153"/><path d="M2803 1064 C2804 1084 2812 1152 2808 1183 C2803 1214 2783 1225 2778 1251 C2773 1276 2775 1305 2778 1336 C2781 1367 2786 1414 2795 1438 C2803 1462 2825 1458 2829 1480 C2833 1503 2822 1558 2820 1573"/><path d="M3071 1353 C3077 1360 3096 1374 3105 1395 C3114 1416 3126 1451 3126 1480 C3127 1510 3112 1558 3109 1573"/><path d="M3194 1438 C3196 1416 3196 1337 3203 1310 C3210 1283 3227 1290 3237 1276 C3247 1262 3254 1248 3262 1225 C3271 1203 3279 1169 3288 1140 C3296 1112 3309 1070 3313 1055"/><path d="M3237 1387 C3247 1374 3269 1330 3296 1310 C3324 1290 3378 1273 3402 1268 C3427 1262 3427 1264 3445 1276 C3462 1289 3484 1334 3508 1344 C3533 1354 3567 1339 3593 1336 C3620 1333 3656 1329 3669 1327"/></g><g fill="none" stroke="#f7f7f5" stroke-width="1.8"><path d="M1822 931 C1843 927 1907 915 1949 909 C1992 904 2034 903 2077 897 C2119 891 2155 882 2204 873 C2254 865 2314 852 2374 846 C2434 839 2523 840 2565 833 C2607 826 2594 811 2625 803 C2655 795 2727 789 2747 786"/><path d="M2272 455 C2275 469 2289 512 2289 540 C2289 568 2274 609 2272 625 C2271 641 2282 632 2281 638 C2279 643 2265 647 2264 659 C2262 671 2268 694 2272 710 C2276 725 2283 740 2289 752 C2296 765 2305 769 2310 786 C2315 803 2316 837 2319 854 C2322 871 2320 875 2327 888 C2335 901 2359 924 2366 931"/><path d="M2412 510 C2424 509 2460 503 2480 504 C2501 505 2526 513 2535 514"/><path d="M2285 638 C2302 639 2365 637 2387 646 C2409 655 2400 682 2417 693 C2433 703 2463 704 2485 710 C2506 715 2528 720 2544 727 C2560 734 2571 741 2582 752 C2594 764 2607 788 2612 795"/><path d="M2506 455 C2512 462 2538 483 2544 497 C2550 512 2536 524 2540 540 C2543 556 2552 580 2565 591 C2579 602 2606 595 2620 604 C2635 612 2644 627 2654 642 C2665 657 2679 684 2684 693"/><path d="M1847 655 C1855 661 1884 666 1894 693 C1904 720 1899 788 1907 816 C1915 844 1931 845 1941 858 C1951 872 1962 890 1966 897"/><path d="M1962 489 C1967 492 1981 505 1992 506 C2002 507 2005 496 2026 493 C2047 490 2104 490 2119 489"/><path d="M3075 455 C3060 476 3005 554 2982 582 C2958 611 2946 611 2935 625 C2924 639 2932 652 2914 667 C2896 683 2857 711 2829 718 C2801 725 2758 711 2744 710"/><path d="M3160 557 C3147 560 3111 570 3084 578 C3057 587 3025 599 2999 608 C2973 617 2939 629 2927 633"/><path d="M2744 850 C2769 851 2850 846 2893 854 C2935 863 2956 890 2999 901 C3041 912 3105 910 3147 918 C3190 926 3201 941 3254 948 C3307 954 3397 949 3466 956 C3535 963 3635 984 3669 990"/><path d="M3203 693 C3215 696 3258 714 3279 714 C3300 714 3306 709 3330 693 C3354 677 3394 629 3424 616 C3453 604 3480 622 3508 616 C3537 611 3579 588 3593 582"/><path d="M3283 578 C3288 593 3307 643 3309 667 C3311 692 3300 709 3296 727 C3292 745 3285 755 3283 774 C3282 792 3290 809 3288 837 C3285 866 3269 914 3271 943 C3272 973 3292 1003 3296 1015"/><path d="M3602 582 C3610 597 3642 632 3653 667 C3664 703 3666 774 3669 795"/><path d="M2829 718 L2829 837"/><path d="M2085 1013 C2091 1024 2109 1057 2119 1077 C2129 1097 2134 1111 2145 1132 C2155 1152 2172 1183 2183 1200 C2194 1217 2203 1220 2208 1234 C2214 1248 2221 1269 2217 1285 C2213 1300 2193 1309 2187 1327 C2182 1346 2190 1373 2183 1395 C2176 1418 2148 1445 2145 1463 C2141 1481 2153 1491 2162 1501 C2170 1511 2189 1511 2196 1523 C2203 1535 2203 1565 2204 1573"/><path d="M1822 1340 C1833 1348 1864 1375 1886 1387 C1907 1399 1925 1398 1949 1412 C1974 1426 2006 1450 2034 1472 C2063 1494 2099 1527 2119 1544 C2139 1561 2148 1568 2153 1573"/><path d="M2510 1179 C2502 1189 2475 1222 2459 1242 C2443 1263 2434 1283 2417 1302 C2400 1320 2375 1333 2357 1353 C2339 1373 2327 1399 2310 1421 C2293 1442 2271 1458 2255 1480 C2239 1503 2220 1544 2213 1557"/><path d="M2434 1310 C2434 1323 2439 1366 2434 1387 C2428 1408 2407 1418 2400 1438 C2393 1458 2387 1483 2391 1506 C2395 1528 2419 1562 2425 1573"/><path d="M2400 1514 C2410 1506 2435 1478 2459 1463 C2483 1448 2496 1436 2544 1425 C2592 1414 2713 1400 2747 1395"/><path d="M2349 1013 C2350 1020 2353 1041 2357 1055 C2361 1070 2371 1091 2374 1098"/><path d="M2893 1089 C2898 1104 2910 1146 2922 1174 C2934 1203 2945 1235 2965 1259 C2985 1283 3018 1300 3041 1319 C3065 1337 3084 1353 3105 1370 C3126 1387 3151 1402 3169 1421 C3186 1439 3201 1463 3211 1480 C3222 1497 3218 1507 3232 1523 C3247 1538 3285 1565 3296 1573"/><path d="M2744 1162 L2914 1153"/><path d="M2803 1064 C2804 1084 2812 1152 2808 1183 C2803 1214 2783 1225 2778 1251 C2773 1276 2775 1305 2778 1336 C2781 1367 2786 1414 2795 1438 C2803 1462 2825 1458 2829 1480 C2833 1503 2822 1558 2820 1573"/><path d="M3071 1353 C3077 1360 3096 1374 3105 1395 C3114 1416 3126 1451 3126 1480 C3127 1510 3112 1558 3109 1573"/><path d="M3194 1438 C3196 1416 3196 1337 3203 1310 C3210 1283 3227 1290 3237 1276 C3247 1262 3254 1248 3262 1225 C3271 1203 3279 1169 3288 1140 C3296 1112 3309 1070 3313 1055"/><path d="M3237 1387 C3247 1374 3269 1330 3296 1310 C3324 1290 3378 1273 3402 1268 C3427 1262 3427 1264 3445 1276 C3462 1289 3484 1334 3508 1344 C3533 1354 3567 1339 3593 1336 C3620 1333 3656 1329 3669 1327"/></g><path d="M2151 455 L2238 1013 L2302 1420 L2314 1425 L2322 1437 L2318 1454 L2340 1471 L2344 1522 L2361 1573" fill="none" stroke="#c4aecb" stroke-width="6"/><path d="M2151 455 L2238 1013 L2302 1420 L2314 1425 L2322 1437 L2318 1454 L2340 1471 L2344 1522 L2361 1573" fill="none" stroke="#dccfe0" stroke-width="2"/><g font-family="Liberation Sans"><text x="2648" y="1034" font-size="35" fill="#333" stroke="#fff" stroke-width="4" stroke-opacity="0.85" paint-order="stroke" letter-spacing="0">Pe</text><text x="2718" y="1064" font-size="35" fill="#333" stroke="#fff" stroke-width="4" stroke-opacity="0.85" paint-order="stroke" letter-spacing="0">ty</text><text x="2455" y="1066" font-size="35" fill="#333" stroke="#fff" stroke-width="4" stroke-opacity="0.85" paint-order="stroke" letter-spacing="0">Ne</text><text x="2557" y="1066" font-size="35" fill="#333" stroke="#fff" stroke-width="4" stroke-opacity="0.85" paint-order="stroke" letter-spacing="0">n</text></g><defs><pattern id="hs" x="3" y="5" width="22" height="38" patternUnits="userSpaceOnUse"><rect width="22" height="38" fill="#ececec"/><g fill="#b5b5b5"><circle cx="3" cy="3" r="2.5"/><circle cx="14" cy="9" r="2"/><circle cx="6" cy="16" r="2.2"/><circle cx="18" cy="25" r="2.5"/><circle cx="8" cy="33" r="2"/><circle cx="21" cy="14" r="1.8"/></g><g fill="#4a4a4a"><circle cx="11" cy="19" r="5.6"/><circle cx="0" cy="0" r="5.6"/><circle cx="22" cy="0" r="5.6"/><circle cx="0" cy="38" r="5.6"/><circle cx="22" cy="38" r="5.6"/></g></pattern></defs><path d="M2644 822 L2689 818 L2728 829 L2754 855 L2792 880 L2831 896 L2840 929 L2856 951 L2889 932 L2921 945 L2921 967 L2889 983 L2872 993 L2895 1009 L2908 1038 L2927 1057 L2901 1080 L2869 1064 L2818 1080 L2786 1076 L2779 1047 L2754 1025 L2734 1012 L2721 1025 L2709 1057 L2680 1080 L2667 1057 L2689 1025 L2705 999 L2699 970 L2673 961 L2654 957 L2631 929 L2625 893 L2644 880 L2641 851Z M2509 1022 L2548 1022 L2580 1006 L2593 1019 L2567 1044 L2580 1076 L2602 1083 L2625 1080 L2631 1038 L2657 1038 L2657 1076 L2686 1102 L2670 1131 L2644 1157 L2625 1134 L2593 1109 L2548 1109 L2535 1121 L2506 1115 L2493 1089 L2509 1064 L2500 1035Z M2432 1118 L2458 1118 L2496 1121 L2541 1128 L2551 1154 L2580 1170 L2593 1186 L2574 1205 L2551 1218 L2503 1218 L2451 1208 L2429 1170Z " fill="#d9d9d9" stroke="#e4e4e4" stroke-width="8" stroke-linejoin="round" opacity="0.9"/><path d="M2644 822 L2689 818 L2728 829 L2754 855 L2792 880 L2831 896 L2840 929 L2856 951 L2889 932 L2921 945 L2921 967 L2889 983 L2872 993 L2895 1009 L2908 1038 L2927 1057 L2901 1080 L2869 1064 L2818 1080 L2786 1076 L2779 1047 L2754 1025 L2734 1012 L2721 1025 L2709 1057 L2680 1080 L2667 1057 L2689 1025 L2705 999 L2699 970 L2673 961 L2654 957 L2631 929 L2625 893 L2644 880 L2641 851Z M2509 1022 L2548 1022 L2580 1006 L2593 1019 L2567 1044 L2580 1076 L2602 1083 L2625 1080 L2631 1038 L2657 1038 L2657 1076 L2686 1102 L2670 1131 L2644 1157 L2625 1134 L2593 1109 L2548 1109 L2535 1121 L2506 1115 L2493 1089 L2509 1064 L2500 1035Z M2432 1118 L2458 1118 L2496 1121 L2541 1128 L2551 1154 L2580 1170 L2593 1186 L2574 1205 L2551 1218 L2503 1218 L2451 1208 L2429 1170Z " fill="url(#hs)"/><g fill="none" stroke="#c8c8c8" stroke-width="2" opacity="0.8"><circle cx="2654" cy="835" r="8"/><circle cx="2686" cy="832" r="8"/><circle cx="2720" cy="839" r="8"/><circle cx="2670" cy="847" r="8"/><circle cx="2686" cy="851" r="8"/><circle cx="2707" cy="851" r="8"/><circle cx="2744" cy="855" r="8"/><circle cx="2664" cy="867" r="8"/><circle cx="2676" cy="869" r="8"/><circle cx="2689" cy="874" r="8"/><circle cx="2717" cy="882" r="8"/><circle cx="2741" cy="876" r="8"/><circle cx="2773" cy="888" r="8"/><circle cx="2787" cy="896" r="8"/><circle cx="2811" cy="900" r="8"/><circle cx="2636" cy="895" r="8"/><circle cx="2664" cy="887" r="8"/><circle cx="2673" cy="900" r="8"/><circle cx="2691" cy="906" r="8"/><circle cx="2721" cy="914" r="8"/><circle cx="2739" cy="922" r="8"/><circle cx="2760" cy="906" r="8"/><circle cx="2797" cy="909" r="8"/><circle cx="2654" cy="925" r="8"/><circle cx="2673" cy="930" r="8"/><circle cx="2691" cy="919" r="8"/><circle cx="2712" cy="932" r="8"/><circle cx="2731" cy="938" r="8"/><circle cx="2746" cy="946" r="8"/><circle cx="2766" cy="933" r="8"/><circle cx="2784" cy="940" r="8"/><circle cx="2815" cy="933" r="8"/><circle cx="2827" cy="949" r="8"/><circle cx="2800" cy="949" r="8"/><circle cx="2892" cy="938" r="8"/><circle cx="2901" cy="956" r="8"/><circle cx="2667" cy="949" r="8"/><circle cx="2691" cy="956" r="8"/><circle cx="2728" cy="966" r="8"/><circle cx="2765" cy="970" r="8"/><circle cx="2805" cy="966" r="8"/><circle cx="2847" cy="956" r="8"/><circle cx="2861" cy="957" r="8"/><circle cx="2874" cy="970" r="8"/><circle cx="2887" cy="962" r="8"/><circle cx="2718" cy="983" r="8"/><circle cx="2742" cy="983" r="8"/><circle cx="2774" cy="993" r="8"/><circle cx="2790" cy="994" r="8"/><circle cx="2815" cy="985" r="8"/><circle cx="2826" cy="996" r="8"/><circle cx="2853" cy="975" r="8"/><circle cx="2839" cy="982" r="8"/><circle cx="2754" cy="1001" r="8"/><circle cx="2782" cy="1022" r="8"/><circle cx="2800" cy="1030" r="8"/><circle cx="2829" cy="1017" r="8"/><circle cx="2848" cy="1002" r="8"/><circle cx="2863" cy="998" r="8"/><circle cx="2882" cy="1009" r="8"/><circle cx="2707" cy="1014" r="8"/><circle cx="2723" cy="1022" r="8"/><circle cx="2709" cy="1031" r="8"/><circle cx="2696" cy="1036" r="8"/><circle cx="2715" cy="1044" r="8"/><circle cx="2701" cy="1052" r="8"/><circle cx="2680" cy="1057" r="8"/><circle cx="2689" cy="1075" r="8"/><circle cx="2773" cy="1031" r="8"/><circle cx="2799" cy="1046" r="8"/><circle cx="2815" cy="1038" r="8"/><circle cx="2882" cy="1031" r="8"/><circle cx="2860" cy="1031" r="8"/><circle cx="2898" cy="1049" r="8"/><circle cx="2922" cy="1057" r="8"/><circle cx="2901" cy="1068" r="8"/><circle cx="2792" cy="1068" r="8"/><circle cx="2815" cy="1070" r="8"/><circle cx="2827" cy="1060" r="8"/><circle cx="2845" cy="1054" r="8"/><circle cx="2868" cy="1056" r="8"/><circle cx="2906" cy="1084" r="8"/><circle cx="2919" cy="1097" r="8"/><circle cx="2940" cy="1107" r="8"/><circle cx="2966" cy="1105" r="8"/><circle cx="2975" cy="1118" r="8"/><circle cx="3001" cy="1134" r="8"/><circle cx="3007" cy="1158" r="8"/><circle cx="3024" cy="1152" r="8"/><circle cx="3051" cy="1113" r="8"/><circle cx="2619" cy="961" r="8"/><circle cx="2609" cy="980" r="8"/><circle cx="2585" cy="1011" r="8"/><circle cx="2566" cy="1014" r="8"/><circle cx="2549" cy="1030" r="8"/><circle cx="2566" cy="1025" r="8"/><circle cx="2464" cy="1011" r="8"/><circle cx="2476" cy="1038" r="8"/><circle cx="2488" cy="1047" r="8"/><circle cx="2529" cy="1047" r="8"/><circle cx="2546" cy="1051" r="8"/><circle cx="2564" cy="1054" r="8"/><circle cx="2519" cy="1068" r="8"/><circle cx="2532" cy="1075" r="8"/><circle cx="2557" cy="1073" r="8"/><circle cx="2511" cy="1105" r="8"/><circle cx="2529" cy="1102" r="8"/><circle cx="2572" cy="1101" r="8"/><circle cx="2532" cy="1089" r="8"/><circle cx="2599" cy="1092" r="8"/><circle cx="2615" cy="1105" r="8"/><circle cx="2647" cy="1101" r="8"/><circle cx="2680" cy="1105" r="8"/><circle cx="2651" cy="1118" r="8"/><circle cx="2635" cy="1125" r="8"/><circle cx="2667" cy="1121" r="8"/><circle cx="2625" cy="1131" r="8"/><circle cx="2638" cy="1152" r="8"/><circle cx="2631" cy="1047" r="8"/><circle cx="2651" cy="1044" r="8"/><circle cx="2638" cy="1057" r="8"/><circle cx="2643" cy="1070" r="8"/><circle cx="2445" cy="1123" r="8"/><circle cx="2442" cy="1149" r="8"/><circle cx="2435" cy="1170" r="8"/><circle cx="2455" cy="1170" r="8"/><circle cx="2448" cy="1189" r="8"/><circle cx="2467" cy="1186" r="8"/><circle cx="2451" cy="1202" r="8"/><circle cx="2495" cy="1128" r="8"/><circle cx="2472" cy="1150" r="8"/><circle cx="2485" cy="1162" r="8"/><circle cx="2503" cy="1147" r="8"/><circle cx="2525" cy="1157" r="8"/><circle cx="2541" cy="1154" r="8"/><circle cx="2535" cy="1131" r="8"/><circle cx="2548" cy="1173" r="8"/><circle cx="2582" cy="1179" r="8"/><circle cx="2535" cy="1189" r="8"/><circle cx="2551" cy="1192" r="8"/><circle cx="2564" cy="1194" r="8"/><circle cx="2508" cy="1208" r="8"/><circle cx="2551" cy="1211" r="8"/><circle cx="2561" cy="1170" r="8"/><circle cx="2757" cy="893" r="8"/><circle cx="2776" cy="922" r="8"/><circle cx="2747" cy="967" r="8"/><circle cx="2786" cy="967" r="8"/><circle cx="2827" cy="974" r="8"/><circle cx="2776" cy="1009" r="8"/><circle cx="2811" cy="1012" r="8"/><circle cx="2741" cy="896" r="8"/><circle cx="2702" cy="896" r="8"/><circle cx="2651" cy="909" r="8"/><circle cx="2728" cy="999" r="8"/><circle cx="2760" cy="951" r="8"/><circle cx="2844" cy="932" r="8"/><circle cx="2860" cy="980" r="8"/><circle cx="2808" cy="919" r="8"/></g><g fill="#444"><circle cx="2654" cy="835" r="6"/><circle cx="2686" cy="832" r="6"/><circle cx="2720" cy="839" r="6"/><circle cx="2670" cy="847" r="6"/><circle cx="2686" cy="851" r="6"/><circle cx="2707" cy="851" r="6"/><circle cx="2744" cy="855" r="6"/><circle cx="2664" cy="867" r="6"/><circle cx="2676" cy="869" r="6"/><circle cx="2689" cy="874" r="6"/><circle cx="2717" cy="882" r="6"/><circle cx="2741" cy="876" r="6"/><circle cx="2773" cy="888" r="6"/><circle cx="2787" cy="896" r="6"/><circle cx="2811" cy="900" r="6"/><circle cx="2636" cy="895" r="6"/><circle cx="2664" cy="887" r="6"/><circle cx="2673" cy="900" r="6"/><circle cx="2691" cy="906" r="6"/><circle cx="2721" cy="914" r="6"/><circle cx="2739" cy="922" r="6"/><circle cx="2760" cy="906" r="6"/><circle cx="2797" cy="909" r="6"/><circle cx="2654" cy="925" r="6"/><circle cx="2673" cy="930" r="6"/><circle cx="2691" cy="919" r="6"/><circle cx="2712" cy="932" r="6"/><circle cx="2731" cy="938" r="6"/><circle cx="2746" cy="946" r="6"/><circle cx="2766" cy="933" r="6"/><circle cx="2784" cy="940" r="6"/><circle cx="2815" cy="933" r="6"/><circle cx="2827" cy="949" r="6"/><circle cx="2800" cy="949" r="6"/><circle cx="2892" cy="938" r="6"/><circle cx="2901" cy="956" r="6"/><circle cx="2667" cy="949" r="6"/><circle cx="2691" cy="956" r="6"/><circle cx="2728" cy="966" r="6"/><circle cx="2765" cy="970" r="6"/><circle cx="2805" cy="966" r="6"/><circle cx="2847" cy="956" r="6"/><circle cx="2861" cy="957" r="6"/><circle cx="2874" cy="970" r="6"/><circle cx="2887" cy="962" r="6"/><circle cx="2718" cy="983" r="6"/><circle cx="2742" cy="983" r="6"/><circle cx="2774" cy="993" r="6"/><circle cx="2790" cy="994" r="6"/><circle cx="2815" cy="985" r="6"/><circle cx="2826" cy="996" r="6"/><circle cx="2853" cy="975" r="6"/><circle cx="2839" cy="982" r="6"/><circle cx="2754" cy="1001" r="6"/><circle cx="2782" cy="1022" r="6"/><circle cx="2800" cy="1030" r="6"/><circle cx="2829" cy="1017" r="6"/><circle cx="2848" cy="1002" r="6"/><circle cx="2863" cy="998" r="6"/><circle cx="2882" cy="1009" r="6"/><circle cx="2707" cy="1014" r="6"/><circle cx="2723" cy="1022" r="6"/><circle cx="2709" cy="1031" r="6"/><circle cx="2696" cy="1036" r="6"/><circle cx="2715" cy="1044" r="6"/><circle cx="2701" cy="1052" r="6"/><circle cx="2680" cy="1057" r="6"/><circle cx="2689" cy="1075" r="6"/><circle cx="2773" cy="1031" r="6"/><circle cx="2799" cy="1046" r="6"/><circle cx="2815" cy="1038" r="6"/><circle cx="2882" cy="1031" r="6"/><circle cx="2860" cy="1031" r="6"/><circle cx="2898" cy="1049" r="6"/><circle cx="2922" cy="1057" r="6"/><circle cx="2901" cy="1068" r="6"/><circle cx="2792" cy="1068" r="6"/><circle cx="2815" cy="1070" r="6"/><circle cx="2827" cy="1060" r="6"/><circle cx="2845" cy="1054" r="6"/><circle cx="2868" cy="1056" r="6"/><circle cx="2906" cy="1084" r="6"/><circle cx="2919" cy="1097" r="6"/><circle cx="2940" cy="1107" r="6"/><circle cx="2966" cy="1105" r="6"/><circle cx="2975" cy="1118" r="6"/><circle cx="3001" cy="1134" r="6"/><circle cx="3007" cy="1158" r="6"/><circle cx="3024" cy="1152" r="6"/><circle cx="3051" cy="1113" r="6"/><circle cx="2619" cy="961" r="6"/><circle cx="2609" cy="980" r="6"/><circle cx="2585" cy="1011" r="6"/><circle cx="2566" cy="1014" r="6"/><circle cx="2549" cy="1030" r="6"/><circle cx="2566" cy="1025" r="6"/><circle cx="2464" cy="1011" r="6"/><circle cx="2476" cy="1038" r="6"/><circle cx="2488" cy="1047" r="6"/><circle cx="2529" cy="1047" r="6"/><circle cx="2546" cy="1051" r="6"/><circle cx="2564" cy="1054" r="6"/><circle cx="2519" cy="1068" r="6"/><circle cx="2532" cy="1075" r="6"/><circle cx="2557" cy="1073" r="6"/><circle cx="2511" cy="1105" r="6"/><circle cx="2529" cy="1102" r="6"/><circle cx="2572" cy="1101" r="6"/><circle cx="2532" cy="1089" r="6"/><circle cx="2599" cy="1092" r="6"/><circle cx="2615" cy="1105" r="6"/><circle cx="2647" cy="1101" r="6"/><circle cx="2680" cy="1105" r="6"/><circle cx="2651" cy="1118" r="6"/><circle cx="2635" cy="1125" r="6"/><circle cx="2667" cy="1121" r="6"/><circle cx="2625" cy="1131" r="6"/><circle cx="2638" cy="1152" r="6"/><circle cx="2631" cy="1047" r="6"/><circle cx="2651" cy="1044" r="6"/><circle cx="2638" cy="1057" r="6"/><circle cx="2643" cy="1070" r="6"/><circle cx="2445" cy="1123" r="6"/><circle cx="2442" cy="1149" r="6"/><circle cx="2435" cy="1170" r="6"/><circle cx="2455" cy="1170" r="6"/><circle cx="2448" cy="1189" r="6"/><circle cx="2467" cy="1186" r="6"/><circle cx="2451" cy="1202" r="6"/><circle cx="2495" cy="1128" r="6"/><circle cx="2472" cy="1150" r="6"/><circle cx="2485" cy="1162" r="6"/><circle cx="2503" cy="1147" r="6"/><circle cx="2525" cy="1157" r="6"/><circle cx="2541" cy="1154" r="6"/><circle cx="2535" cy="1131" r="6"/><circle cx="2548" cy="1173" r="6"/><circle cx="2582" cy="1179" r="6"/><circle cx="2535" cy="1189" r="6"/><circle cx="2551" cy="1192" r="6"/><circle cx="2564" cy="1194" r="6"/><circle cx="2508" cy="1208" r="6"/><circle cx="2551" cy="1211" r="6"/><circle cx="2561" cy="1170" r="6"/><circle cx="2757" cy="893" r="6"/><circle cx="2776" cy="922" r="6"/><circle cx="2747" cy="967" r="6"/><circle cx="2786" cy="967" r="6"/><circle cx="2827" cy="974" r="6"/><circle cx="2776" cy="1009" r="6"/><circle cx="2811" cy="1012" r="6"/><circle cx="2741" cy="896" r="6"/><circle cx="2702" cy="896" r="6"/><circle cx="2651" cy="909" r="6"/><circle cx="2728" cy="999" r="6"/><circle cx="2760" cy="951" r="6"/><circle cx="2844" cy="932" r="6"/><circle cx="2860" cy="980" r="6"/><circle cx="2808" cy="919" r="6"/></g><g font-family="Liberation Sans"><text x="2317" y="520" font-size="35" fill="#333" stroke="#fff" stroke-width="4" stroke-opacity="0.85" paint-order="stroke" letter-spacing="3">Rome</text><text x="1845" y="638" font-size="34" fill="#333" stroke="#fff" stroke-width="4" stroke-opacity="0.85" paint-order="stroke" letter-spacing="1">Gadsden</text><text x="1958" y="882" font-size="35" fill="#333" stroke="#fff" stroke-width="4" stroke-opacity="0.85" paint-order="stroke" letter-spacing="0">Anniston</text><text x="1837" y="948" font-size="35" fill="#333" stroke="#fff" stroke-width="4" stroke-opacity="0.85" paint-order="stroke" letter-spacing="0">Oxford</text><text x="2325" y="928" font-size="35" fill="#333" stroke="#fff" stroke-width="4" stroke-opacity="0.85" paint-order="stroke" letter-spacing="0">Carrollton</text><text x="2767" y="631" font-size="34" fill="#333" stroke="#fff" stroke-width="4" stroke-opacity="0.85" paint-order="stroke" letter-spacing="1">Roswell</text><text x="3317" y="674" font-size="35" fill="#333" stroke="#fff" stroke-width="4" stroke-opacity="0.85" paint-order="stroke" letter-spacing="0">Athens</text><text x="2982" y="703" font-size="35" fill="#333" stroke="#fff" stroke-width="4" stroke-opacity="0.85" paint-order="stroke" letter-spacing="0">Lawrenceville</text><text x="2759" y="822" font-size="36" fill="#333" stroke="#fff" stroke-width="4" stroke-opacity="0.85" paint-order="stroke" letter-spacing="0">Atlanta</text><text x="2393" y="1327" font-size="36" fill="#333" stroke="#fff" stroke-width="4" stroke-opacity="0.85" paint-order="stroke" letter-spacing="0">Lagrange</text><text x="2140" y="1578" font-size="35" fill="#333" stroke="#fff" stroke-width="4" stroke-opacity="0.85" paint-order="stroke" letter-spacing="0">Auburn</text><text x="2820" y="1189" font-size="36" fill="#333" stroke="#fff" stroke-width="4" stroke-opacity="0.85" paint-order="stroke" letter-spacing="0">Griffin</text><text x="3177" y="1425" font-size="36" fill="#333" stroke="#fff" stroke-width="4" stroke-opacity="0.85" paint-order="stroke" letter-spacing="0">Macon</text><text x="3158" y="1539" font-size="33" fill="#333" stroke="#fff" stroke-width="4" stroke-opacity="0.85" paint-order="stroke" letter-spacing="0">Warner</text><text x="3160" y="1570" font-size="33" fill="#333" stroke="#fff" stroke-width="4" stroke-opacity="0.85" paint-order="stroke" letter-spacing="0">Robins</text><text x="1822" y="849" font-size="30" fill="#8d877f" letter-spacing="2">Pelham</text><text x="1830" y="877" font-size="30" fill="#8d877f" letter-spacing="2">Range</text><text x="3302" y="1501" font-size="34" fill="#a192a6" letter-spacing="8">GEORGIA</text><text x="3257" y="1161" font-size="31" fill="#6f7a68" stroke="#e4ecd9" stroke-width="3" paint-order="stroke" text-anchor="middle">Oconee</text><text x="3257" y="1193" font-size="31" fill="#6f7a68" stroke="#e4ecd9" stroke-width="3" paint-order="stroke" text-anchor="middle">National</text><text x="3257" y="1221" font-size="31" fill="#6f7a68" stroke="#e4ecd9" stroke-width="3" paint-order="stroke" text-anchor="middle">Forest</text><text x="1845" y="1180" font-size="31" fill="#6f7a68" stroke="#e4ecd9" stroke-width="3" paint-order="stroke" text-anchor="middle">ega</text><text x="1840" y="1208" font-size="31" fill="#6f7a68" stroke="#e4ecd9" stroke-width="3" paint-order="stroke" text-anchor="middle">nal</text><text x="1838" y="1236" font-size="31" fill="#6f7a68" stroke="#e4ecd9" stroke-width="3" paint-order="stroke" text-anchor="middle">st</text><text x="2130" y="682" font-size="30" fill="#666" font-style="italic" stroke="#fff" stroke-width="3" stroke-opacity="0.6" paint-order="stroke">1849 ft</text><text x="1968" y="1003" font-size="30" fill="#666" font-style="italic" stroke="#fff" stroke-width="3" stroke-opacity="0.6" paint-order="stroke">2407 ft</text><text x="2931" y="655" font-size="30" fill="#666" font-style="italic" stroke="#fff" stroke-width="3" stroke-opacity="0.6" paint-order="stroke">1163 ft</text><text x="2552" y="1423" font-size="30" fill="#666" font-style="italic" stroke="#fff" stroke-width="3" stroke-opacity="0.6" paint-order="stroke">1393 ft</text><text x="2971" y="1344" font-size="30" fill="#666" font-style="italic" stroke="#fff" stroke-width="3" stroke-opacity="0.6" paint-order="stroke">721 ft</text><text x="2043" y="510" font-size="32" fill="#4e9fb0" font-style="italic" text-anchor="middle">Weiss</text><text x="2043" y="534" font-size="32" fill="#4e9fb0" font-style="italic" text-anchor="middle">Lake</text><text x="2971" y="478" font-size="32" fill="#4e9fb0" font-style="italic" text-anchor="middle">Lake</text><text x="2971" y="504" font-size="32" fill="#4e9fb0" font-style="italic" text-anchor="middle">Sidney</text><text x="2971" y="530" font-size="32" fill="#4e9fb0" font-style="italic" text-anchor="middle">Lanier</text><text x="2297" y="1300" font-size="32" fill="#4e9fb0" font-style="italic" text-anchor="middle">West</text><text x="2297" y="1327" font-size="32" fill="#4e9fb0" font-style="italic" text-anchor="middle">Point</text><text x="2297" y="1356" font-size="32" fill="#4e9fb0" font-style="italic" text-anchor="middle">Lake</text><text x="1903" y="1480" font-size="32" fill="#4e9fb0" font-style="italic" text-anchor="middle">Lake</text><text x="1903" y="1507" font-size="32" fill="#4e9fb0" font-style="italic" text-anchor="middle">Martin</text><text x="0" y="0" transform="translate(2153,520) rotate(-20)" font-size="30" fill="#5da9b8" font-style="italic" letter-spacing="0">Coosa River</text><text x="0" y="0" transform="translate(2146,888) rotate(-52)" font-size="30" fill="#5da9b8" font-style="italic" letter-spacing="0">Tallapoosa River</text><text x="0" y="0" transform="translate(2530,905) rotate(-48)" font-size="30" fill="#5da9b8" font-style="italic" letter-spacing="0">Chattahoochee River</text><text x="0" y="0" transform="translate(2752,846) rotate(22)" font-size="30" fill="#5da9b8" font-style="italic" letter-spacing="0">South River</text><text x="0" y="0" transform="translate(2958,832) rotate(62)" font-size="30" fill="#5da9b8" font-style="italic" letter-spacing="0">Yellow River</text><text x="0" y="0" transform="translate(3183,952) rotate(55)" font-size="30" fill="#5da9b8" font-style="italic" letter-spacing="0">Little River</text><text x="0" y="0" transform="translate(2790,1458) rotate(30)" font-size="30" fill="#5da9b8" font-style="italic" letter-spacing="0">Flint River</text></g></svg><div style="position:absolute;left:1853px;top:487px;width:100px;height:99px;background:#fff;border-bottom:3px solid #6e6e6e"></div><svg style="position:absolute;left:1882px;top:511px" width="46" height="46" viewBox="0 0 46 46"><path d="M5 41.5V21.5H8.2V5H15.5L38.5 21.5V41.5H27V28.5H15V41.5Z" fill="none" stroke="#707070" stroke-width="3"/></svg><div style="position:absolute;left:3159px;top:487px;width:477px;height:92px;background:#fff"></div><svg style="position:absolute;left:3165px;top:505px" width="70" height="50"><g fill="#333"><circle cx="19" cy="27.5" r="8"/><circle cx="44" cy="37" r="8"/><circle cx="62" cy="16" r="8"/></g></svg><div style="position:absolute;left:3266px;top:510px;font-size:39.5px;color:#555;white-space:nowrap;line-height:46px">WeatherRelate...</div><svg style="position:absolute;left:3594px;top:508px" width="24" height="44"><path d="M3 2l19 21L3 44" fill="none" stroke="#666" stroke-width="3"/></svg>
<svg style="position:absolute;left:0;top:0" width="3724" height="2920" viewBox="0 0 3724 2920"><rect x="269" y="1895.5" width="1346" height="3" fill="#e2e2e2"/><rect x="269" y="2045.5" width="1346" height="3" fill="#e2e2e2"/><rect x="269" y="2195.5" width="1346" height="3" fill="#e2e2e2"/><rect x="269" y="2345.5" width="1346" height="3" fill="#e2e2e2"/><rect x="269" y="2495.5" width="1346" height="3.5" fill="#bdbdbd"/><rect x="402.0" y="2497" width="3" height="12" fill="#c4c4c4"/><rect x="671.0" y="2497" width="3" height="12" fill="#c4c4c4"/><rect x="940.5" y="2497" width="3" height="12" fill="#c4c4c4"/><rect x="1210.0" y="2497" width="3" height="12" fill="#c4c4c4"/><rect x="1479.0" y="2497" width="3" height="12" fill="#c4c4c4"/><text x="235" y="2509.5" text-anchor="end" font-size="36" fill="#555" font-family="Liberation Sans">0</text><text x="235" y="2359.5" text-anchor="end" font-size="36" fill="#555" font-family="Liberation Sans">1</text><text x="235" y="2209.5" text-anchor="end" font-size="36" fill="#555" font-family="Liberation Sans">2</text><text x="235" y="2059.5" text-anchor="end" font-size="36" fill="#555" font-family="Liberation Sans">3</text><text x="235" y="1909.5" text-anchor="end" font-size="36" fill="#555" font-family="Liberation Sans">4</text><line x1="269" y1="1832" x2="1575" y2="1832" stroke="#ff2a00" stroke-width="3.3" stroke-dasharray="6.6 5.5"/><polyline points="403,1878 672.5,1849 942,1826 1211.5,1811 1481,1789" fill="none" stroke="#ff7a14" stroke-width="5"/><text x="1576" y="1840" font-size="44" fill="#ff2200" font-family="Liberation Serif" font-style="italic">x = 4.44</text><rect x="1583" y="1810" width="15" height="3" fill="#ff2200"/><text x="0" y="0" transform="translate(110,2248) rotate(-90)" text-anchor="middle" font-size="42" fill="#4d4d4d" font-family="Liberation Sans">Avg PPT</text><text x="657" y="2815" text-anchor="middle" font-size="41" fill="#4d4d4d" font-family="Liberation Sans">CAUSE</text><text x="0" y="0" transform="translate(405.5,2545) rotate(-45)" text-anchor="end" font-size="37" fill="#666" font-family="Liberation Sans">20 01 Lightning</text><text x="0" y="0" transform="translate(674.5,2545) rotate(-45)" text-anchor="end" font-size="37" fill="#666" font-family="Liberation Sans">20 04 Wind/Tree</text><text x="0" y="0" transform="translate(944,2545) rotate(-45)" text-anchor="end" font-size="37" fill="#666" font-family="Liberation Sans">20 03 Wind</text><text x="0" y="0" transform="translate(1213.5,2545) rotate(-45)" text-anchor="end" font-size="37" fill="#666" font-family="Liberation Sans">20 05 Major S...</text><text x="0" y="0" transform="translate(1482.5,2545) rotate(-45)" text-anchor="end" font-size="37" fill="#666" font-family="Liberation Sans">20 02 Ice</text></svg>
<svg style="position:absolute;left:0;top:0" width="3724" height="2920" viewBox="0 0 3724 2920"><rect x="2112" y="2560.04" width="1486" height="3" fill="#e4e4e4"/><rect x="2112" y="2442.58" width="1486" height="3" fill="#e4e4e4"/><rect x="2112" y="2325.12" width="1486" height="3" fill="#e4e4e4"/><rect x="2112" y="2207.66" width="1486" height="3" fill="#e4e4e4"/><rect x="2112" y="2090.2" width="1486" height="3" fill="#e4e4e4"/><rect x="2112" y="1972.7399999999998" width="1486" height="3" fill="#e4e4e4"/><rect x="2112" y="1855.28" width="1486" height="3" fill="#e4e4e4"/><text x="2083" y="2691.0" text-anchor="end" font-size="36" fill="#555" font-family="Liberation Sans">0</text><text x="2083" y="2573.54" text-anchor="end" font-size="36" fill="#555" font-family="Liberation Sans">200</text><text x="2083" y="2456.08" text-anchor="end" font-size="36" fill="#555" font-family="Liberation Sans">400</text><text x="2083" y="2338.62" text-anchor="end" font-size="36" fill="#555" font-family="Liberation Sans">600</text><text x="2083" y="2221.16" text-anchor="end" font-size="36" fill="#555" font-family="Liberation Sans">800</text><text x="2083" y="2103.7" text-anchor="end" font-size="36" fill="#555" font-family="Liberation Sans">1,000</text><text x="2083" y="1986.2399999999998" text-anchor="end" font-size="36" fill="#555" font-family="Liberation Sans">1,200</text><text x="2083" y="1868.78" text-anchor="end" font-size="36" fill="#555" font-family="Liberation Sans">1,400</text><rect x="2112" y="2677.5" width="1486" height="3.5" fill="#bdbdbd"/><rect x="2159.8" y="2636.7144" width="105.1" height="42.2856" fill="#4d4d4d" stroke="#e6e6e6" stroke-width="2"/><rect x="2266.9" y="2641.4128" width="105.1" height="37.5872" fill="#4d4d4d" stroke="#e6e6e6" stroke-width="2"/><rect x="2374.0" y="2648.4604" width="105.1" height="30.539600000000004" fill="#4d4d4d" stroke="#e6e6e6" stroke-width="2"/><rect x="2481.1000000000004" y="2584.4447" width="105.1" height="94.5553" fill="#4d4d4d" stroke="#e6e6e6" stroke-width="2"/><rect x="2588.2000000000003" y="1851.4942999999998" width="105.1" height="827.5057" fill="#4d4d4d" stroke="#e6e6e6" stroke-width="2"/><rect x="2695.3" y="2250.8583" width="105.1" height="428.1417" fill="#4d4d4d" stroke="#e6e6e6" stroke-width="2"/><rect x="2802.4" y="2587.9685" width="105.1" height="91.03150000000001" fill="#4d4d4d" stroke="#e6e6e6" stroke-width="2"/><rect x="2909.5" y="2595.6034" width="105.1" height="83.3966" fill="#4d4d4d" stroke="#e6e6e6" stroke-width="2"/><rect x="3016.6000000000004" y="2032.3827" width="105.1" height="646.6173" fill="#4d4d4d" stroke="#e6e6e6" stroke-width="2"/><rect x="3123.7000000000003" y="2172.1601" width="105.1" height="506.83990000000006" fill="#4d4d4d" stroke="#e6e6e6" stroke-width="2"/><rect x="3230.8" y="2670.7778" width="105.1" height="8.2222" fill="#4d4d4d" stroke="#e6e6e6" stroke-width="2"/><rect x="3337.9" y="2600.3018" width="105.1" height="78.6982" fill="#4d4d4d" stroke="#e6e6e6" stroke-width="2"/><rect x="3445.0" y="2588.5558" width="105.1" height="90.44420000000001" fill="#4d4d4d" stroke="#e6e6e6" stroke-width="2"/><rect x="2249.1" y="2679" width="3" height="12" fill="#c8c8c8"/><text x="2250.6" y="2733" text-anchor="middle" font-size="36" fill="#555" font-family="Liberation Sans">3</text><rect x="2713.0" y="2679" width="3" height="12" fill="#c8c8c8"/><text x="2714.5" y="2733" text-anchor="middle" font-size="36" fill="#555" font-family="Liberation Sans">4</text><rect x="3178.0" y="2679" width="3" height="12" fill="#c8c8c8"/><text x="3179.5" y="2733" text-anchor="middle" font-size="36" fill="#555" font-family="Liberation Sans">5</text><line x1="2804" y1="1851" x2="2804" y2="2679" stroke="#ff2a00" stroke-width="3" stroke-dasharray="5.5 5.5"/><line x1="2881.5" y1="1851" x2="2881.5" y2="2679" stroke="#ff6a55" stroke-width="3.3" stroke-dasharray="5.5 5.5"/><text x="2737" y="1860" font-size="44" fill="#ff2200" font-family="Liberation Serif" font-style="italic">x = 4.2</text><path d="M2745 1834 q4 -5 8 -2 t8 -2" fill="none" stroke="#ff2200" stroke-width="3"/><text x="2816" y="1812" font-size="44" fill="#ff2200" font-family="Liberation Serif" font-style="italic">x = 4.4</text><rect x="2823" y="1782" width="15" height="3" fill="#ff2200"/><text x="0" y="0" transform="translate(1895,2247) rotate(-90)" text-anchor="middle" font-size="44" fill="#4d4d4d" font-family="Liberation Sans">Frequency</text><text x="2741" y="2815" text-anchor="middle" font-size="41" fill="#4d4d4d" font-family="Liberation Sans">PPT_1</text></svg>
</body></html>
